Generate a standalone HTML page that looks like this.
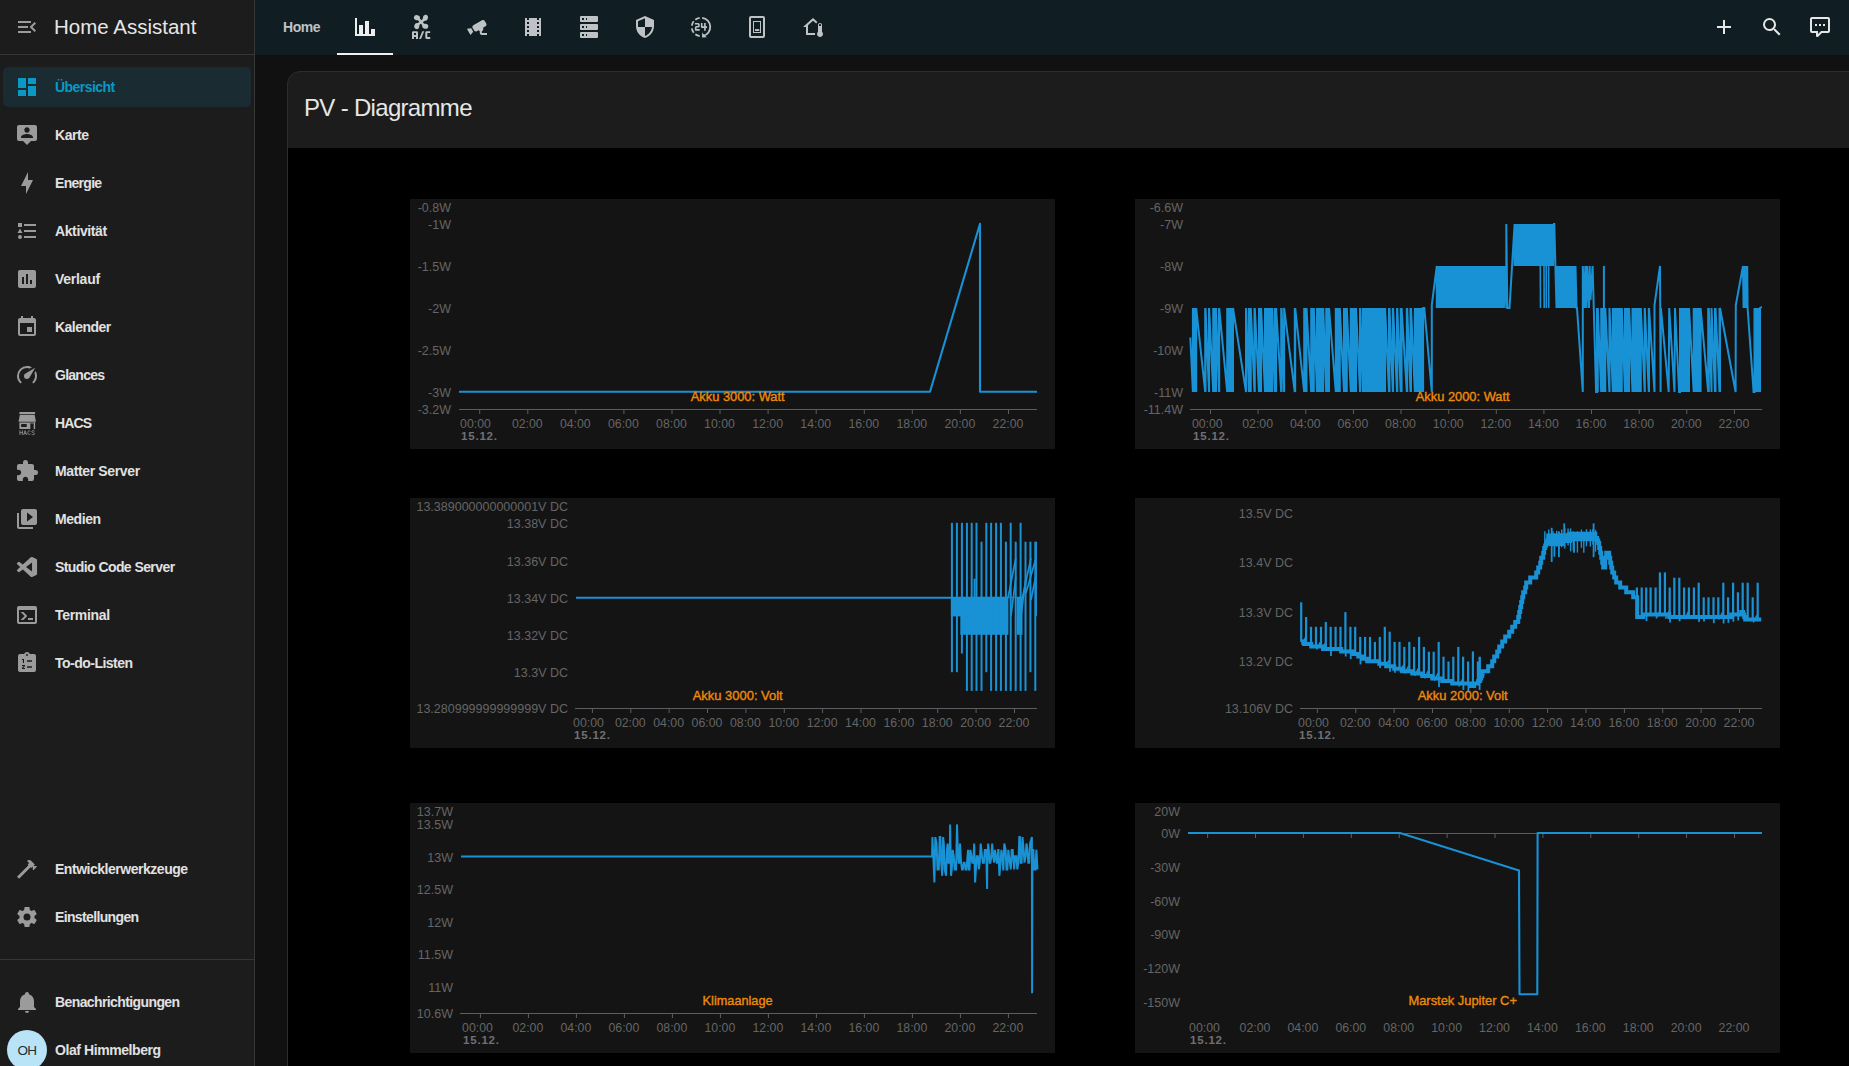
<!DOCTYPE html>
<html lang="de"><head><meta charset="utf-8"><title>Home Assistant</title>
<style>
*{margin:0;padding:0;box-sizing:border-box}
html,body{width:1849px;height:1066px;overflow:hidden;background:#111111;font-family:"Liberation Sans", sans-serif;color:#e1e1e1}
.ic{position:absolute;display:block;overflow:visible}
#root{position:relative;width:1849px;height:1066px;overflow:hidden;background:#111111}
#side{position:absolute;left:0;top:0;width:255px;height:1066px;background:#1c1c1c;border-right:1px solid #363636}
#sidehead{position:absolute;left:0;top:0;width:254px;height:55px;border-bottom:1px solid #363636}
#hatitle{position:absolute;left:54px;top:14px;font-size:20.5px;line-height:26px;color:#e6e6e6;white-space:nowrap}
#sel{position:absolute;left:3px;top:67px;width:248px;height:40px;border-radius:5px;background:#1a2b32}
.sl{position:absolute;font-size:14px;font-weight:700;line-height:24px;color:#e1e1e1;white-space:nowrap}
#sidediv{position:absolute;left:0;top:959px;width:254px;height:1px;background:#363636}
#avatar{position:absolute;left:7px;top:1030px;width:40px;height:40px;border-radius:50%;background:#b9e4f7;color:#1f2f36;font-size:13.5px;letter-spacing:-0.6px;text-align:center;line-height:41px}
#head{position:absolute;left:255px;top:0;width:1594px;height:55px;background:#101e24}
#tabhome{position:absolute;left:28px;top:15px;font-size:14px;font-weight:700;line-height:24px;color:#bfc3c5;white-space:nowrap}
#tabline{position:absolute;left:82px;top:53px;width:56px;height:2px;background:#f0f0f0}
#card{position:absolute;left:287px;top:71px;width:1600px;height:1100px;background:#1c1c1c;border:1px solid #2d2d2d;border-radius:13px;overflow:hidden}
#cardblack{position:absolute;left:0;top:76px;width:1600px;height:1100px;background:#000}
#cardtitle{position:absolute;left:304px;top:92px;font-size:24px;line-height:32px;color:#e6e6e6;white-space:nowrap}
#charts{position:absolute;left:0;top:0}
#charts text{font-family:"Liberation Sans", sans-serif}
</style></head><body><div id="root">
<div id="side">
<div id="sidehead"></div>
<svg class="ic" style="left:15.0px;top:15.0px;width:24px;height:24px" viewBox="0 0 24 24" fill="#9b9b9b" ><path d="M21,15.61L19.59,17L14.58,12L19.59,7L21,8.39L17.44,12L21,15.61M3,6H16V8H3V6M3,13V11H13V13H3M3,18V16H16V18H3Z"/></svg>
<div id="hatitle" style="letter-spacing:-0.002px">Home Assistant</div>
<div id="sel"></div>
<svg class="ic" style="left:15.0px;top:75.0px;width:24px;height:24px" viewBox="0 0 24 24" fill="#0b98c5" ><path d="M13,3V9H21V3M13,21H21V11H13M3,21H11V15H3M3,13H11V3H3V13Z"/></svg>
<div class="sl" style="left:55px;top:75px;letter-spacing:-0.560px;color:#0b98c5;">Übersicht</div>
<svg class="ic" style="left:15.0px;top:123.0px;width:24px;height:24px" viewBox="0 0 24 24" fill="#9b9b9b" ><path d="M20,2H4A2,2 0 0,0 2,4V16A2,2 0 0,0 4,18H8L12,22L16,18H20A2,2 0 0,0 22,16V4A2,2 0 0,0 20,2M12,4.3C13.5,4.3 14.7,5.5 14.7,7C14.7,8.5 13.5,9.7 12,9.7C10.5,9.7 9.3,8.5 9.3,7C9.3,5.5 10.5,4.3 12,4.3M18,15H6V14.1C6,12.1 10,11 12,11C14,11 18,12.1 18,14.1V15Z"/></svg>
<div class="sl" style="left:55px;top:123px;letter-spacing:-0.424px;">Karte</div>
<svg class="ic" style="left:15.0px;top:171.0px;width:24px;height:24px" viewBox="0 0 24 24" fill="#9b9b9b" ><path d="M11,15H6L13,1V9H18L11,23V15Z"/></svg>
<div class="sl" style="left:55px;top:171px;letter-spacing:-0.710px;">Energie</div>
<svg class="ic" style="left:15.0px;top:219.0px;width:24px;height:24px" viewBox="0 0 24 24" fill="#9b9b9b" ><path d="M5,9.5L7.5,14H2.5L5,9.5M3,4H7V8H3V4M5,20A2,2 0 0,0 7,18A2,2 0 0,0 5,16A2,2 0 0,0 3,18A2,2 0 0,0 5,20M9,5V7H21V5H9M9,19H21V17H9V19M9,13H21V11H9V13Z"/></svg>
<div class="sl" style="left:55px;top:219px;letter-spacing:-0.392px;">Aktivität</div>
<svg class="ic" style="left:15.0px;top:267.0px;width:24px;height:24px" viewBox="0 0 24 24" fill="#9b9b9b" ><path d="M17,17H15V13H17M13,17H11V7H13M9,17H7V10H9M19,3H5C3.89,3 3,3.89 3,5V19A2,2 0 0,0 5,21H19A2,2 0 0,0 21,19V5C21,3.89 20.1,3 19,3Z"/></svg>
<div class="sl" style="left:55px;top:267px;letter-spacing:-0.267px;">Verlauf</div>
<svg class="ic" style="left:15.0px;top:315.0px;width:24px;height:24px" viewBox="0 0 24 24" fill="#9b9b9b" ><path d="M19,19H5V8H19M16,1V3H8V1H6V3H5C3.89,3 3,3.89 3,5V19A2,2 0 0,0 5,21H19A2,2 0 0,0 21,19V5C21,3.89 20.1,3 19,3H18V1M17,12H12V17H17V12Z"/></svg>
<div class="sl" style="left:55px;top:315px;letter-spacing:-0.546px;">Kalender</div>
<svg class="ic" style="left:15.0px;top:363.0px;width:24px;height:24px" viewBox="0 0 24 24" fill="#9b9b9b" ><path d="M12,16A3,3 0 0,1 9,13C9,11.88 9.61,10.9 10.5,10.39L20.21,4.77L14.68,14.35C14.18,15.33 13.17,16 12,16M12,3C13.81,3 15.5,3.5 16.97,4.32L14.87,5.53C14,5.19 13,5 12,5A8,8 0 0,0 4,13C4,15.21 4.89,17.21 6.34,18.65H6.35C6.74,19.04 6.74,19.67 6.35,20.06C5.96,20.45 5.32,20.45 4.93,20.07V20.07C3.12,18.26 2,15.76 2,13A10,10 0 0,1 12,3M22,13C22,15.76 20.88,18.26 19.07,20.07V20.07C18.68,20.45 18.05,20.45 17.66,20.06C17.27,19.67 17.27,19.04 17.66,18.65V18.65C19.11,17.2 20,15.21 20,13C20,12 19.81,11 19.46,10.1L20.67,8C21.5,9.5 22,11.18 22,13Z"/></svg>
<div class="sl" style="left:55px;top:363px;letter-spacing:-0.731px;">Glances</div>
<svg class="ic" style="left:15.0px;top:411.0px;width:24px;height:24px" viewBox="0 0 24 24" fill="#9b9b9b" ><rect x="4.4" y="1" width="15.7" height="2"/><path d="M4.9,3.8H19.6L21,10.7H3.5Z"/><path fill-rule="evenodd" d="M4.4,11.5H15.3V18.1H4.4Z M6.2,13H11.7V16.1H6.2Z"/><rect x="18.7" y="11.5" width="1.4" height="6.6"/><rect x="15.3" y="11.5" width="4.8" height="0.9"/><g fill="none" stroke="#8c8c8c" stroke-width="0.92"><path d="M4.9,19.3V23.9 M7.4,19.3V23.9 M4.9,21.6H7.4"/><path d="M8.6,23.9L10.1,19.6L11.6,23.9 M9.2,22.6H11"/><path d="M15.4,20.4C14.7,19.3 12.8,19.5 12.8,21.6C12.8,23.8 14.7,24 15.4,22.9"/><path d="M19.6,20.3C18.9,19.3 16.8,19.4 16.9,20.6C17,21.9 19.6,21.4 19.6,22.8C19.6,24 17.3,24 16.6,23"/></g></svg>
<div class="sl" style="left:55px;top:411px;letter-spacing:-0.857px;">HACS</div>
<svg class="ic" style="left:15.0px;top:459.0px;width:24px;height:24px" viewBox="0 0 24 24" fill="#9b9b9b" ><path d="M20.5,11H19V7C19,5.89 18.1,5 17,5H13V3.5A2.5,2.5 0 0,0 10.5,1A2.5,2.5 0 0,0 8,3.5V5H4A2,2 0 0,0 2,7V10.8H3.5C5,10.8 6.2,12 6.2,13.5C6.2,15 5,16.2 3.5,16.2H2V20A2,2 0 0,0 4,22H7.8V20.5C7.8,19 9,17.8 10.5,17.8C12,17.8 13.2,19 13.2,20.5V22H17A2,2 0 0,0 19,20V16H20.5A2.5,2.5 0 0,0 23,13.5A2.5,2.5 0 0,0 20.5,11Z"/></svg>
<div class="sl" style="left:55px;top:459px;letter-spacing:-0.367px;">Matter Server</div>
<svg class="ic" style="left:15.0px;top:507.0px;width:24px;height:24px" viewBox="0 0 24 24" fill="#9b9b9b" ><path d="M4,6H2V20A2,2 0 0,0 4,22H18V20H4V6M20,2H8A2,2 0 0,0 6,4V16A2,2 0 0,0 8,18H20A2,2 0 0,0 22,16V4A2,2 0 0,0 20,2M12,14.5V5.5L18,10L12,14.5Z"/></svg>
<div class="sl" style="left:55px;top:507px;letter-spacing:-0.427px;">Medien</div>
<svg class="ic" style="left:15.0px;top:555.0px;width:24px;height:24px" viewBox="0 0 24 24" fill="#9b9b9b" ><g transform="translate(12 12) scale(0.84) translate(-12 -12)"><path d="M23.15 2.587L18.21.21a1.494 1.494 0 0 0-1.705.29l-9.46 8.63-4.12-3.128a.999.999 0 0 0-1.276.057L.327 7.261A1 1 0 0 0 .326 8.74L3.899 12 .326 15.26a1 1 0 0 0 .001 1.479L1.65 17.94a.999.999 0 0 0 1.276.057l4.12-3.128 9.46 8.63a1.492 1.492 0 0 0 1.704.29l4.942-2.377A1.5 1.5 0 0 0 24 20.06V3.939a1.5 1.5 0 0 0-.85-1.352zm-5.146 14.861L10.826 12l7.178-5.448v10.896z"/></g></svg>
<div class="sl" style="left:55px;top:555px;letter-spacing:-0.578px;">Studio Code Server</div>
<svg class="ic" style="left:15.0px;top:603.0px;width:24px;height:24px" viewBox="0 0 24 24" fill="#9b9b9b" ><path d="M20,19V7H4V19H20M20,3A2,2 0 0,1 22,5V19A2,2 0 0,1 20,21H4A2,2 0 0,1 2,19V5C2,3.89 2.9,3 4,3H20M13,17V15H18V17H13M9.58,13L5.57,9H8.4L11.7,12.3C12.09,12.69 12.09,13.33 11.7,13.72L8.42,17H5.59L9.58,13Z"/></svg>
<div class="sl" style="left:55px;top:603px;letter-spacing:-0.316px;">Terminal</div>
<svg class="ic" style="left:15.0px;top:651.0px;width:24px;height:24px" viewBox="0 0 24 24" fill="#9b9b9b" ><path fill-rule="evenodd" d="M19,3H14.82C14.4,1.84 13.3,1 12,1C10.7,1 9.6,1.84 9.18,3H5A2,2 0 0,0 3,5V19A2,2 0 0,0 5,21H19A2,2 0 0,0 21,19V5A2,2 0 0,0 19,3ZM12,3A1,1 0 0,1 13,4A1,1 0 0,1 12,5A1,1 0 0,1 11,4A1,1 0 0,1 12,3ZM12,9.2H17V10.8H12Z M12,15.2H17V16.8H12ZM7,8H9V12H7.9V9.1H7ZM7,14H10V15L8.4,17H10V18H7V17L8.6,15H7Z"/></svg>
<div class="sl" style="left:55px;top:651px;letter-spacing:-0.512px;">To-do-Listen</div>
<svg class="ic" style="left:15.0px;top:857.0px;width:24px;height:24px" viewBox="0 0 24 24" fill="#9b9b9b" ><path d="M2,19.63L13.43,8.2L12.72,7.5L14.14,6.07L12,3.89C13.2,2.7 15.09,2.7 16.27,3.89L19.87,7.5L18.45,8.91H21.29L22,9.62L18.45,13.21L17.74,12.5V9.62L16.27,11.04L15.56,10.33L4.13,21.76L2,19.63Z"/></svg>
<div class="sl" style="left:55px;top:857px;letter-spacing:-0.474px;">Entwicklerwerkzeuge</div>
<svg class="ic" style="left:15.0px;top:905.0px;width:24px;height:24px" viewBox="0 0 24 24" fill="#9b9b9b" ><path d="M12,15.5A3.5,3.5 0 0,1 8.5,12A3.5,3.5 0 0,1 12,8.5A3.5,3.5 0 0,1 15.5,12A3.5,3.5 0 0,1 12,15.5M19.43,12.97C19.47,12.65 19.5,12.33 19.5,12C19.5,11.67 19.47,11.34 19.43,11L21.54,9.37C21.73,9.22 21.78,8.95 21.66,8.73L19.66,5.27C19.54,5.05 19.27,4.96 19.05,5.05L16.56,6.05C16.04,5.66 15.5,5.32 14.87,5.07L14.5,2.42C14.46,2.18 14.25,2 14,2H10C9.75,2 9.54,2.18 9.5,2.42L9.13,5.07C8.5,5.32 7.96,5.66 7.44,6.05L4.95,5.05C4.73,4.96 4.46,5.05 4.34,5.27L2.34,8.73C2.21,8.95 2.27,9.22 2.46,9.37L4.57,11C4.53,11.34 4.5,11.67 4.5,12C4.5,12.33 4.53,12.65 4.57,12.97L2.46,14.63C2.27,14.78 2.21,15.05 2.34,15.27L4.34,18.73C4.46,18.95 4.73,19.03 4.95,18.95L7.44,17.94C7.96,18.34 8.5,18.68 9.13,18.93L9.5,21.58C9.54,21.82 9.75,22 10,22H14C14.25,22 14.46,21.82 14.5,21.58L14.87,18.93C15.5,18.67 16.04,18.34 16.56,17.94L19.05,18.95C19.27,19.03 19.54,18.95 19.66,18.73L21.66,15.27C21.78,15.05 21.73,14.78 21.54,14.63L19.43,12.97Z"/></svg>
<div class="sl" style="left:55px;top:905px;letter-spacing:-0.641px;">Einstellungen</div>
<svg class="ic" style="left:15.0px;top:990.0px;width:24px;height:24px" viewBox="0 0 24 24" fill="#9b9b9b" ><path d="M21,19V20H3V19L5,17V11C5,7.9 7.03,5.17 10,4.29C10,4.19 10,4.1 10,4A2,2 0 0,1 12,2A2,2 0 0,1 14,4C14,4.1 14,4.19 14,4.29C16.97,5.17 19,7.9 19,11V17L21,19M14,21A2,2 0 0,1 12,23A2,2 0 0,1 10,21"/></svg>
<div class="sl" style="left:55px;top:990px;letter-spacing:-0.603px;">Benachrichtigungen</div>
<div id="sidediv"></div>
<div id="avatar"><span>OH</span></div>
<div class="sl" style="left:55px;top:1038px;letter-spacing:-0.424px;">Olaf Himmelberg</div>
</div>
<div id="head">
<div id="tabhome" style="letter-spacing:-0.435px">Home</div>
<svg class="ic" style="left:98.0px;top:15.0px;width:24px;height:24px" viewBox="0 0 24 24" fill="#ededed" color="#ededed"><path d="M22,21H2V3H4V19H6V10H10V19H12V6H16V19H18V14H22V21Z"/></svg>
<svg class="ic" style="left:154.0px;top:15.0px;width:24px;height:24px" viewBox="0 0 24 24" fill="#bfc3c5" color="#bfc3c5"><g transform="rotate(0 12.1 6.95)"><ellipse cx="7.95" cy="2.65" rx="3.05" ry="2.55" transform="rotate(12 7.95 2.65)"/><path d="M12.1,6.95 L9.4,3.6" fill="none" stroke="currentColor" stroke-width="2.5" stroke-linecap="round"/></g><g transform="rotate(90 12.1 6.95)"><ellipse cx="7.95" cy="2.65" rx="3.05" ry="2.55" transform="rotate(12 7.95 2.65)"/><path d="M12.1,6.95 L9.4,3.6" fill="none" stroke="currentColor" stroke-width="2.5" stroke-linecap="round"/></g><g transform="rotate(180 12.1 6.95)"><ellipse cx="7.95" cy="2.65" rx="3.05" ry="2.55" transform="rotate(12 7.95 2.65)"/><path d="M12.1,6.95 L9.4,3.6" fill="none" stroke="currentColor" stroke-width="2.5" stroke-linecap="round"/></g><g transform="rotate(270 12.1 6.95)"><ellipse cx="7.95" cy="2.65" rx="3.05" ry="2.55" transform="rotate(12 7.95 2.65)"/><path d="M12.1,6.95 L9.4,3.6" fill="none" stroke="currentColor" stroke-width="2.5" stroke-linecap="round"/></g><circle cx="12.1" cy="6.95" r="1.5"/><path fill-rule="evenodd" d="M3,24V17.6A1.4,1.4 0 0,1 4.4,16.2H7.6A1.4,1.4 0 0,1 9,17.6V24H7V21.9H5V24Z M5,18H7V20.1H5Z"/><path d="M10.1,24L13.3,16.2H15.2L12,24Z"/><path d="M21.2,16.2V18.1H18.3V22.1H21.2V24H17.7A1.4,1.4 0 0,1 16.3,22.6V17.6A1.4,1.4 0 0,1 17.7,16.2Z"/></svg>
<svg class="ic" style="left:210.0px;top:15.0px;width:24px;height:24px" viewBox="0 0 24 24" fill="#bfc3c5" color="#bfc3c5"><path d="M18.15,4.94C17.77,4.91 17.37,5 17,5.2L8.35,10.2C7.39,10.76 7.07,12 7.62,12.94L9.12,15.53C9.67,16.5 10.89,16.82 11.85,16.27L13.65,15.23C13.92,15.69 14.32,16.06 14.81,16.27V18.04C14.81,19.13 15.7,20 16.81,20H22V18.04H16.81V16.27C17.72,15.87 18.31,14.97 18.31,14C18.31,13.54 18.19,13.11 17.97,12.73L20.5,11.27C21.47,10.71 21.8,9.5 21.24,8.53L19.74,5.94C19.4,5.34 18.79,5 18.15,4.94M6.22,13.17L2,13.87L2.75,15.17L4.75,18.63L5.5,19.93L8.22,16.63L6.22,13.17Z"/></svg>
<svg class="ic" style="left:266.0px;top:15.0px;width:24px;height:24px" viewBox="0 0 24 24" fill="#bfc3c5" color="#bfc3c5"><path d="M18,9H16V7H18M18,13H16V11H18M18,17H16V15H18M8,9H6V7H8M8,13H6V11H8M8,17H6V15H8M18,3V5H16V3H8V5H6V3H4V21H6V19H8V21H16V19H18V21H20V3H18Z"/></svg>
<svg class="ic" style="left:322.0px;top:15.0px;width:24px;height:24px" viewBox="0 0 24 24" fill="#bfc3c5" color="#bfc3c5"><path d="M4,1H20A1,1 0 0,1 21,2V6A1,1 0 0,1 20,7H4A1,1 0 0,1 3,6V2A1,1 0 0,1 4,1M4,9H20A1,1 0 0,1 21,10V14A1,1 0 0,1 20,15H4A1,1 0 0,1 3,14V10A1,1 0 0,1 4,9M4,17H20A1,1 0 0,1 21,18V22A1,1 0 0,1 20,23H4A1,1 0 0,1 3,22V18A1,1 0 0,1 4,17M9,5H10V3H9V5M9,13H10V11H9V13M9,21H10V19H9V21M5,3V5H7V3H5M5,11V13H7V11H5M5,19V21H7V19H5Z"/></svg>
<svg class="ic" style="left:378.0px;top:15.0px;width:24px;height:24px" viewBox="0 0 24 24" fill="#bfc3c5" color="#bfc3c5"><path d="M12,12H19C18.47,16.11 15.72,19.78 12,20.92V12H5V6.3L12,3.19M12,1L3,5V11C3,16.55 6.84,21.73 12,23C17.16,21.73 21,16.55 21,11V5L12,1Z"/></svg>
<svg class="ic" style="left:434.0px;top:15.0px;width:24px;height:24px" viewBox="0 0 24 24" fill="#bfc3c5" color="#bfc3c5"><path d="M13.2,2.80 A9.25,9.25 0 0 1 14.2,20.95" fill="none" stroke="currentColor" stroke-width="1.8"/><path d="M13.1,17.6 L13.1,22.4 L17.9,22.2 L15.6,20.6 Z"/><path d="M10.71,21.16 A9.25,9.25 0 0 1 6.31,19.29" fill="none" stroke="currentColor" stroke-width="1.8"/><path d="M4.71,17.69 A9.25,9.25 0 0 1 2.84,13.29" fill="none" stroke="currentColor" stroke-width="1.8"/><path d="M2.84,10.71 A9.25,9.25 0 0 1 4.71,6.31" fill="none" stroke="currentColor" stroke-width="1.8"/><path d="M6.31,4.71 A9.25,9.25 0 0 1 10.71,2.84" fill="none" stroke="currentColor" stroke-width="1.8"/><g fill="none" stroke="currentColor" stroke-width="1.6" stroke-linejoin="round"><path d="M5.9,8.7 H9.1 Q9.9,8.7 9.9,9.5 V10.9 Q9.9,11.75 9.1,11.75 H7.5 Q6.7,11.75 6.7,12.55 V14.9 H10.7"/><path d="M12.7,7.9 V12.1 H18 M15.9,7.9 V15.7"/></g></svg>
<svg class="ic" style="left:490.0px;top:15.0px;width:24px;height:24px" viewBox="0 0 24 24" fill="#bfc3c5" color="#bfc3c5"><path fill-rule="evenodd" d="M6,1H18A2,2 0 0,1 20,3V21A2,2 0 0,1 18,23H6A2,2 0 0,1 4,21V3A2,2 0 0,1 6,1Z M6,3V21H18V3Z"/><path fill-rule="evenodd" d="M8,6H16V18H8Z M9,7V17H15V7Z"/><rect x="10" y="14.1" width="4.3" height="1.9"/></svg>
<svg class="ic" style="left:546.0px;top:15.0px;width:24px;height:24px" viewBox="0 0 24 24" fill="#bfc3c5" color="#bfc3c5"><path d="M19 8C20.11 8 21 8.9 21 10V16.76C21.61 17.31 22 18.11 22 19C22 20.66 20.66 22 19 22C17.34 22 16 20.66 16 19C16 18.11 16.39 17.31 17 16.76V10C17 8.9 17.9 8 19 8M19 9C18.45 9 18 9.45 18 10V11H20V10C20 9.45 19.55 9 19 9M12 5.69L7 10.19V18H14.1L14 19L14.1 20H5V12H2L12 3L16.4 6.96C15.89 7.4 15.5 7.97 15.25 8.61L12 5.69Z"/></svg>
<div id="tabline"></div>
<svg class="ic" style="left:1457.0px;top:15.0px;width:24px;height:24px" viewBox="0 0 24 24" fill="#e6e6e6" ><path d="M19,13H13V19H11V13H5V11H11V5H13V11H19V13Z"/></svg>
<svg class="ic" style="left:1505.0px;top:15.0px;width:24px;height:24px" viewBox="0 0 24 24" fill="#e6e6e6" ><path d="M9.5,3A6.5,6.5 0 0,1 16,9.5C16,11.11 15.41,12.59 14.44,13.73L14.71,14H15.5L20.5,19L19,20.5L14,15.5V14.71L13.73,14.44C12.59,15.41 11.11,16 9.5,16A6.5,6.5 0 0,1 3,9.5A6.5,6.5 0 0,1 9.5,3M9.5,5C7,5 5,7 5,9.5C5,12 7,14 9.5,14C12,14 14,12 14,9.5C14,7 12,5 9.5,5Z"/></svg>
<svg class="ic" style="left:1553.0px;top:15.0px;width:24px;height:24px" viewBox="0 0 24 24" fill="#e6e6e6" ><path d="M9,22A1,1 0 0,1 8,21V18H4A2,2 0 0,1 2,16V4C2,2.89 2.9,2 4,2H20A2,2 0 0,1 22,4V16A2,2 0 0,1 20,18H13.9L10.2,21.71C10,21.9 9.75,22 9.5,22H9M10,16V19.08L13.08,16H20V4H4V16H10M17,11H15V9H17V11M13,11H11V9H13V11M9,11H7V9H9V11Z"/></svg>
</div>
<div id="card"><div id="cardblack"></div></div>
<div id="cardtitle" style="letter-spacing:-0.683px">PV - Diagramme</div>
<svg id="charts" width="1849" height="1066" viewBox="0 0 1849 1066">
<rect x="410" y="199" width="645" height="250" fill="#141414"/>
<text x="451" y="212.3" font-size="12.5" fill="#656565" text-anchor="end">-0.8W</text>
<text x="451" y="229.0" font-size="12.5" fill="#656565" text-anchor="end">-1W</text>
<text x="451" y="271.0" font-size="12.5" fill="#656565" text-anchor="end">-1.5W</text>
<text x="451" y="313.0" font-size="12.5" fill="#656565" text-anchor="end">-2W</text>
<text x="451" y="355.0" font-size="12.5" fill="#656565" text-anchor="end">-2.5W</text>
<text x="451" y="397.0" font-size="12.5" fill="#656565" text-anchor="end">-3W</text>
<text x="451" y="414.0" font-size="12.5" fill="#656565" text-anchor="end">-3.2W</text>
<rect x="459" y="409" width="578" height="1" fill="#5e5e62"/>
<rect x="479.2" y="409" width="1" height="5" fill="#5e5e62"/>
<text x="475.5" y="428" font-size="12.3" fill="#656565" text-anchor="middle">00:00</text>
<rect x="527.3" y="409" width="1" height="5" fill="#5e5e62"/>
<text x="527.3" y="428" font-size="12.3" fill="#656565" text-anchor="middle">02:00</text>
<rect x="575.3" y="409" width="1" height="5" fill="#5e5e62"/>
<text x="575.3" y="428" font-size="12.3" fill="#656565" text-anchor="middle">04:00</text>
<rect x="623.4" y="409" width="1" height="5" fill="#5e5e62"/>
<text x="623.4" y="428" font-size="12.3" fill="#656565" text-anchor="middle">06:00</text>
<rect x="671.5" y="409" width="1" height="5" fill="#5e5e62"/>
<text x="671.5" y="428" font-size="12.3" fill="#656565" text-anchor="middle">08:00</text>
<rect x="719.5" y="409" width="1" height="5" fill="#5e5e62"/>
<text x="719.5" y="428" font-size="12.3" fill="#656565" text-anchor="middle">10:00</text>
<rect x="767.6" y="409" width="1" height="5" fill="#5e5e62"/>
<text x="767.6" y="428" font-size="12.3" fill="#656565" text-anchor="middle">12:00</text>
<rect x="815.7" y="409" width="1" height="5" fill="#5e5e62"/>
<text x="815.7" y="428" font-size="12.3" fill="#656565" text-anchor="middle">14:00</text>
<rect x="863.8" y="409" width="1" height="5" fill="#5e5e62"/>
<text x="863.8" y="428" font-size="12.3" fill="#656565" text-anchor="middle">16:00</text>
<rect x="911.8" y="409" width="1" height="5" fill="#5e5e62"/>
<text x="911.8" y="428" font-size="12.3" fill="#656565" text-anchor="middle">18:00</text>
<rect x="959.9" y="409" width="1" height="5" fill="#5e5e62"/>
<text x="959.9" y="428" font-size="12.3" fill="#656565" text-anchor="middle">20:00</text>
<rect x="1008.0" y="409" width="1" height="5" fill="#5e5e62"/>
<text x="1008.0" y="428" font-size="12.3" fill="#656565" text-anchor="middle">22:00</text>
<text x="461" y="439.6" font-size="11.5" font-weight="700" fill="#707074" letter-spacing="0.8">15.12.</text>
<path d="M459.0,391.8 L930.0,391.8 L980.0,223.8 L980.0,391.8 L1037.0,391.8" fill="none" stroke="#1991d5" stroke-width="2.1" stroke-linejoin="round" stroke-miterlimit="2" stroke-linecap="butt"/>
<text x="737.7" y="401" font-size="12.6" font-weight="400" fill="#ee8a0a" stroke="#ee8a0a" stroke-width="0.35" text-anchor="middle" textLength="94" lengthAdjust="spacingAndGlyphs">Akku 3000: Watt</text>
<rect x="1135" y="199" width="645" height="250" fill="#141414"/>
<text x="1183" y="212.3" font-size="12.5" fill="#656565" text-anchor="end">-6.6W</text>
<text x="1183" y="229.0" font-size="12.5" fill="#656565" text-anchor="end">-7W</text>
<text x="1183" y="271.0" font-size="12.5" fill="#656565" text-anchor="end">-8W</text>
<text x="1183" y="313.0" font-size="12.5" fill="#656565" text-anchor="end">-9W</text>
<text x="1183" y="355.0" font-size="12.5" fill="#656565" text-anchor="end">-10W</text>
<text x="1183" y="397.0" font-size="12.5" fill="#656565" text-anchor="end">-11W</text>
<text x="1183" y="414.0" font-size="12.5" fill="#656565" text-anchor="end">-11.4W</text>
<rect x="1190" y="409" width="572" height="1" fill="#5e5e62"/>
<rect x="1210.0" y="409" width="1" height="5" fill="#5e5e62"/>
<text x="1207.3" y="428" font-size="12.3" fill="#656565" text-anchor="middle">00:00</text>
<rect x="1257.6" y="409" width="1" height="5" fill="#5e5e62"/>
<text x="1257.6" y="428" font-size="12.3" fill="#656565" text-anchor="middle">02:00</text>
<rect x="1305.3" y="409" width="1" height="5" fill="#5e5e62"/>
<text x="1305.3" y="428" font-size="12.3" fill="#656565" text-anchor="middle">04:00</text>
<rect x="1352.9" y="409" width="1" height="5" fill="#5e5e62"/>
<text x="1352.9" y="428" font-size="12.3" fill="#656565" text-anchor="middle">06:00</text>
<rect x="1400.5" y="409" width="1" height="5" fill="#5e5e62"/>
<text x="1400.5" y="428" font-size="12.3" fill="#656565" text-anchor="middle">08:00</text>
<rect x="1448.2" y="409" width="1" height="5" fill="#5e5e62"/>
<text x="1448.2" y="428" font-size="12.3" fill="#656565" text-anchor="middle">10:00</text>
<rect x="1495.8" y="409" width="1" height="5" fill="#5e5e62"/>
<text x="1495.8" y="428" font-size="12.3" fill="#656565" text-anchor="middle">12:00</text>
<rect x="1543.4" y="409" width="1" height="5" fill="#5e5e62"/>
<text x="1543.4" y="428" font-size="12.3" fill="#656565" text-anchor="middle">14:00</text>
<rect x="1591.0" y="409" width="1" height="5" fill="#5e5e62"/>
<text x="1591.0" y="428" font-size="12.3" fill="#656565" text-anchor="middle">16:00</text>
<rect x="1638.7" y="409" width="1" height="5" fill="#5e5e62"/>
<text x="1638.7" y="428" font-size="12.3" fill="#656565" text-anchor="middle">18:00</text>
<rect x="1686.3" y="409" width="1" height="5" fill="#5e5e62"/>
<text x="1686.3" y="428" font-size="12.3" fill="#656565" text-anchor="middle">20:00</text>
<rect x="1733.9" y="409" width="1" height="5" fill="#5e5e62"/>
<text x="1733.9" y="428" font-size="12.3" fill="#656565" text-anchor="middle">22:00</text>
<text x="1193" y="439.6" font-size="11.5" font-weight="700" fill="#707074" letter-spacing="0.8">15.12.</text>
<path d="M1190.3,337.5 L1192.9,392.0 L1192.9,392.0 L1192.9,308.0 L1193.5,392.0 L1193.5,308.0 L1194.0,392.0 L1194.0,308.0 L1194.8,392.0 L1194.8,308.0 L1195.3,392.0 L1195.3,308.0 L1196.0,392.0 L1196.0,308.0 L1196.2,392.0 L1196.2,308.0 L1205.2,392.0 L1205.2,308.0 L1205.5,392.0 L1205.5,308.0 L1209.0,392.0 L1209.0,308.0 L1209.1,392.0 L1209.1,308.0 L1213.2,392.0 L1213.2,308.0 L1213.6,392.0 L1213.6,308.0 L1214.3,392.0 L1214.3,308.0 L1214.8,392.0 L1214.8,308.0 L1215.3,392.0 L1215.3,308.0 L1215.9,392.0 L1215.9,308.0 L1216.0,392.0 L1216.0,308.0 L1219.0,392.0 L1219.0,308.0 L1219.2,392.0 L1219.2,308.0 L1227.2,392.0 L1227.2,308.0 L1227.8,392.0 L1227.8,308.0 L1228.6,392.0 L1228.6,308.0 L1229.5,392.0 L1229.5,308.0 L1230.2,392.0 L1230.2,308.0 L1230.9,392.0 L1230.9,308.0 L1231.8,392.0 L1231.8,308.0 L1232.3,392.0 L1232.3,308.0 L1233.0,392.0 L1233.0,308.0 L1246.0,392.0 L1246.0,308.0 L1246.0,392.0 L1246.0,308.0 L1248.9,392.0 L1248.9,308.0 L1249.4,392.0 L1249.4,308.0 L1249.9,392.0 L1249.9,308.0 L1250.5,392.0 L1250.5,308.0 L1250.8,392.0 L1250.8,308.0 L1254.5,392.0 L1254.5,308.0 L1254.8,392.0 L1254.8,308.0 L1259.0,392.0 L1259.0,308.0 L1259.7,392.0 L1259.7,308.0 L1260.5,392.0 L1260.5,308.0 L1261.1,392.0 L1261.1,308.0 L1261.1,392.0 L1261.1,308.0 L1265.0,392.0 L1265.0,308.0 L1265.4,392.0 L1265.4,308.0 L1265.9,392.0 L1265.9,308.0 L1266.5,392.0 L1266.5,308.0 L1267.3,392.0 L1267.3,308.0 L1267.9,392.0 L1267.9,308.0 L1268.5,392.0 L1268.5,308.0 L1269.3,392.0 L1269.3,308.0 L1269.9,392.0 L1269.9,308.0 L1270.5,392.0 L1270.5,308.0 L1271.4,392.0 L1271.4,308.0 L1272.2,392.0 L1272.2,308.0 L1272.2,392.0 L1272.2,308.0 L1274.9,392.0 L1274.9,308.0 L1275.6,392.0 L1275.6,308.0 L1276.1,392.0 L1276.1,308.0 L1281.2,392.0 L1281.2,308.0 L1281.6,392.0 L1281.6,308.0 L1284.1,392.0 L1284.1,308.0 L1294.8,392.0 L1294.8,308.0 L1295.2,392.0 L1295.2,308.0 L1304.2,392.0 L1304.2,308.0 L1304.7,392.0 L1304.7,308.0 L1305.7,392.0 L1305.7,308.0 L1306.2,392.0 L1306.2,308.0 L1306.5,392.0 L1306.5,308.0 L1311.2,392.0 L1311.2,308.0 L1312.0,392.0 L1312.0,308.0 L1312.5,392.0 L1312.5,308.0 L1313.2,392.0 L1313.2,308.0 L1313.7,392.0 L1313.7,308.0 L1313.8,392.0 L1313.8,308.0 L1317.0,392.0 L1317.0,308.0 L1317.8,392.0 L1317.8,308.0 L1318.5,392.0 L1318.5,308.0 L1319.4,392.0 L1319.4,308.0 L1320.0,392.0 L1320.0,308.0 L1320.8,392.0 L1320.8,308.0 L1321.6,392.0 L1321.6,308.0 L1322.3,392.0 L1322.3,308.0 L1323.0,392.0 L1323.0,308.0 L1323.2,392.0 L1323.2,308.0 L1326.2,392.0 L1326.2,308.0 L1327.1,392.0 L1327.1,308.0 L1327.8,392.0 L1327.8,308.0 L1328.5,392.0 L1328.5,308.0 L1329.0,392.0 L1329.0,308.0 L1335.8,392.0 L1335.8,308.0 L1336.6,392.0 L1336.6,308.0 L1337.3,392.0 L1337.3,308.0 L1338.3,392.0 L1338.3,308.0 L1339.1,392.0 L1339.1,308.0 L1339.7,392.0 L1339.7,308.0 L1339.8,392.0 L1339.8,308.0 L1344.0,392.0 L1344.0,308.0 L1344.7,392.0 L1344.7,308.0 L1345.2,392.0 L1345.2,308.0 L1345.9,392.0 L1345.9,308.0 L1346.4,392.0 L1346.4,308.0 L1346.8,392.0 L1346.8,308.0 L1350.8,392.0 L1350.8,308.0 L1351.2,392.0 L1351.2,308.0 L1352.1,392.0 L1352.1,308.0 L1352.6,392.0 L1352.6,308.0 L1353.2,392.0 L1353.2,308.0 L1353.8,392.0 L1353.8,308.0 L1354.7,392.0 L1354.7,308.0 L1355.2,392.0 L1355.2,308.0 L1355.8,392.0 L1355.8,308.0 L1356.0,392.0 L1356.0,308.0 L1360.0,392.0 L1360.0,308.0 L1360.3,392.0 L1360.3,308.0 L1363.0,392.0 L1363.0,308.0 L1363.8,392.0 L1363.8,308.0 L1364.7,392.0 L1364.7,308.0 L1365.3,392.0 L1365.3,308.0 L1365.9,392.0 L1365.9,308.0 L1366.6,392.0 L1366.6,308.0 L1367.5,392.0 L1367.5,308.0 L1368.4,392.0 L1368.4,308.0 L1368.9,392.0 L1368.9,308.0 L1369.5,392.0 L1369.5,308.0 L1370.0,392.0 L1370.0,308.0 L1370.6,392.0 L1370.6,308.0 L1371.3,392.0 L1371.3,308.0 L1372.0,392.0 L1372.0,308.0 L1372.6,392.0 L1372.6,308.0 L1373.1,392.0 L1373.1,308.0 L1373.7,392.0 L1373.7,308.0 L1374.3,392.0 L1374.3,308.0 L1375.1,392.0 L1375.1,308.0 L1376.0,392.0 L1376.0,308.0 L1376.8,392.0 L1376.8,308.0 L1377.5,392.0 L1377.5,308.0 L1378.3,392.0 L1378.3,308.0 L1379.1,392.0 L1379.1,308.0 L1379.5,392.0 L1379.5,308.0 L1380.4,392.0 L1380.4,308.0 L1381.3,392.0 L1381.3,308.0 L1382.2,392.0 L1382.2,308.0 L1383.0,392.0 L1383.0,308.0 L1383.7,392.0 L1383.7,308.0 L1384.3,392.0 L1384.3,308.0 L1384.8,392.0 L1384.8,308.0 L1385.1,392.0 L1385.1,308.0 L1389.0,392.0 L1389.0,308.0 L1389.4,392.0 L1389.4,308.0 L1389.5,392.0 L1389.5,308.0 L1392.8,392.0 L1392.8,308.0 L1393.1,392.0 L1393.1,308.0 L1397.0,392.0 L1397.0,308.0 L1397.3,392.0 L1397.3,308.0 L1400.7,392.0 L1400.7,308.0 L1401.3,392.0 L1401.3,308.0 L1401.6,392.0 L1401.6,308.0 L1406.8,392.0 L1406.8,308.0 L1407.2,392.0 L1407.2,308.0 L1407.2,392.0 L1407.2,308.0 L1410.5,392.0 L1410.5,308.0 L1411.0,392.0 L1411.0,308.0 L1414.8,392.0 L1414.8,308.0 L1415.4,392.0 L1415.4,308.0 L1415.8,392.0 L1415.8,308.0 L1416.7,392.0 L1416.7,308.0 L1417.5,392.0 L1417.5,308.0 L1418.0,392.0 L1418.0,308.0 L1418.6,392.0 L1418.6,308.0 L1419.2,392.0 L1419.2,308.0 L1419.8,392.0 L1419.8,308.0 L1420.4,392.0 L1420.4,308.0 L1421.2,392.0 L1421.2,308.0 L1422.2,392.0 L1422.2,308.0 L1422.9,392.0 L1422.9,308.0 L1423.1,392.0 L1423.1,308.0 L1424.3,308.0 L1431.8,392.0 L1431.8,305.0 L1436.8,266.0 L1436.8,308.0 L1437.4,266.0 L1437.4,308.0 L1438.0,266.0 L1438.0,308.0 L1438.7,266.0 L1438.7,308.0 L1439.4,266.0 L1439.4,308.0 L1440.6,266.0 L1440.6,308.0 L1441.2,266.0 L1441.2,308.0 L1441.7,266.0 L1441.7,308.0 L1443.0,266.0 L1443.0,308.0 L1443.9,266.0 L1443.9,308.0 L1444.5,266.0 L1444.5,308.0 L1445.5,266.0 L1445.5,308.0 L1446.0,266.0 L1446.0,308.0 L1446.9,266.0 L1446.9,308.0 L1448.2,266.0 L1448.2,308.0 L1449.4,266.0 L1449.4,308.0 L1450.5,266.0 L1450.5,308.0 L1451.2,266.0 L1451.2,308.0 L1452.0,266.0 L1452.0,308.0 L1452.6,266.0 L1452.6,308.0 L1453.7,266.0 L1453.7,308.0 L1454.6,266.0 L1454.6,308.0 L1455.8,266.0 L1455.8,308.0 L1456.5,266.0 L1456.5,308.0 L1457.2,266.0 L1457.2,308.0 L1458.4,266.0 L1458.4,308.0 L1459.6,266.0 L1459.6,308.0 L1460.8,266.0 L1460.8,308.0 L1462.0,266.0 L1462.0,308.0 L1463.1,266.0 L1463.1,308.0 L1464.2,266.0 L1464.2,308.0 L1464.9,266.0 L1464.9,308.0 L1465.8,266.0 L1465.8,308.0 L1466.6,266.0 L1466.6,308.0 L1467.1,266.0 L1467.1,308.0 L1467.6,266.0 L1467.6,308.0 L1468.4,266.0 L1468.4,308.0 L1469.1,266.0 L1469.1,308.0 L1470.1,266.0 L1470.1,308.0 L1471.4,266.0 L1471.4,308.0 L1472.2,266.0 L1472.2,308.0 L1473.5,266.0 L1473.5,308.0 L1474.8,266.0 L1474.8,308.0 L1476.0,266.0 L1476.0,308.0 L1476.8,266.0 L1476.8,308.0 L1477.5,266.0 L1477.5,308.0 L1478.2,266.0 L1478.2,308.0 L1478.9,266.0 L1478.9,308.0 L1479.5,266.0 L1479.5,308.0 L1480.5,266.0 L1480.5,308.0 L1481.7,266.0 L1481.7,308.0 L1482.9,266.0 L1482.9,308.0 L1483.8,266.0 L1483.8,308.0 L1484.8,266.0 L1484.8,308.0 L1486.0,266.0 L1486.0,308.0 L1486.5,266.0 L1486.5,308.0 L1487.6,266.0 L1487.6,308.0 L1488.8,266.0 L1488.8,308.0 L1489.9,266.0 L1489.9,308.0 L1491.0,266.0 L1491.0,308.0 L1491.9,266.0 L1491.9,308.0 L1492.5,266.0 L1492.5,308.0 L1493.7,266.0 L1493.7,308.0 L1494.4,266.0 L1494.4,308.0 L1495.6,266.0 L1495.6,308.0 L1496.8,266.0 L1496.8,308.0 L1497.7,266.0 L1497.7,308.0 L1498.5,266.0 L1498.5,308.0 L1499.7,266.0 L1499.7,308.0 L1500.8,266.0 L1500.8,308.0 L1501.5,266.0 L1501.5,308.0 L1502.1,266.0 L1502.1,308.0 L1502.7,266.0 L1502.7,308.0 L1503.9,266.0 L1503.9,308.0 L1505.1,266.0 L1506.3,308.0 L1506.3,224.0 L1507.3,308.0 L1509.5,308.0 L1514.6,224.0 L1514.6,266.0 L1515.2,224.0 L1515.2,266.0 L1516.4,224.0 L1516.4,266.0 L1517.7,224.0 L1517.7,266.0 L1518.7,224.0 L1518.7,266.0 L1519.5,224.0 L1519.5,266.0 L1520.4,224.0 L1520.4,266.0 L1521.0,224.0 L1521.0,266.0 L1521.5,224.0 L1521.5,266.0 L1522.8,224.0 L1522.8,266.0 L1523.8,224.0 L1523.8,266.0 L1524.7,224.0 L1524.7,266.0 L1526.0,224.0 L1526.0,266.0 L1526.8,224.0 L1526.8,266.0 L1528.0,224.0 L1528.0,266.0 L1529.2,224.0 L1529.2,266.0 L1529.9,224.0 L1529.9,266.0 L1530.6,224.0 L1530.6,266.0 L1531.3,224.0 L1531.3,266.0 L1532.0,224.0 L1532.0,266.0 L1533.0,224.0 L1533.0,266.0 L1533.7,224.0 L1533.7,266.0 L1534.5,224.0 L1534.5,266.0 L1535.1,224.0 L1535.1,266.0 L1536.3,224.0 L1536.3,266.0 L1537.1,224.0 L1537.1,266.0 L1538.0,224.0 L1538.0,266.0 L1539.0,224.0 L1539.0,266.0 L1540.2,224.0 L1540.2,266.0 L1541.0,224.0 L1541.0,266.0 L1542.2,224.0 L1542.2,266.0 L1543.1,224.0 L1543.1,266.0 L1544.1,224.0 L1544.1,266.0 L1545.0,224.0 L1545.0,266.0 L1545.5,224.0 L1545.5,266.0 L1546.4,224.0 L1546.4,266.0 L1547.0,224.0 L1547.0,266.0 L1547.5,224.0 L1547.5,266.0 L1548.6,224.0 L1548.6,266.0 L1549.3,224.0 L1549.3,266.0 L1550.2,224.0 L1550.2,266.0 L1551.2,224.0 L1551.2,266.0 L1552.2,224.0 L1552.2,266.0 L1553.0,224.0 L1553.0,266.0 L1553.9,224.0 L1554.3,224.0 L1556.5,308.0 L1556.5,266.0 L1557.4,308.0 L1557.4,266.0 L1558.6,308.0 L1558.6,266.0 L1559.2,308.0 L1559.2,266.0 L1560.1,308.0 L1560.1,266.0 L1560.8,308.0 L1560.8,266.0 L1561.5,308.0 L1561.5,266.0 L1562.6,308.0 L1562.6,266.0 L1563.5,308.0 L1563.5,266.0 L1564.5,308.0 L1564.5,266.0 L1565.6,308.0 L1565.6,266.0 L1566.8,308.0 L1566.8,266.0 L1567.7,308.0 L1567.7,266.0 L1568.7,308.0 L1568.7,266.0 L1569.6,308.0 L1569.6,266.0 L1570.5,308.0 L1570.5,266.0 L1571.5,308.0 L1571.5,266.0 L1572.4,308.0 L1572.4,266.0 L1573.3,308.0 L1573.3,266.0 L1574.2,308.0 L1574.2,266.0 L1575.5,308.0 L1575.5,266.0 L1576.5,308.0 L1577.0,308.0 L1582.8,392.0 L1582.8,266.0 L1584.6,308.0 L1585.3,266.0 L1586.4,308.0 L1587.1,266.0 L1589.0,308.0 L1589.7,266.0 L1590.5,300.0 L1592.6,266.0 L1596.1,392.0 L1597.0,392.0 L1597.0,308.0 L1597.8,392.0 L1597.8,308.0 L1601.2,392.0 L1601.2,308.0 L1602.2,392.0 L1602.2,308.0 L1602.9,392.0 L1602.9,308.0 L1603.7,392.0 L1603.7,308.0 L1604.8,392.0 L1604.8,308.0 L1605.3,392.0 L1605.3,308.0 L1609.4,392.0 L1609.4,308.0 L1609.5,392.0 L1609.5,308.0 L1612.8,392.0 L1612.8,308.0 L1613.3,392.0 L1613.3,308.0 L1614.1,392.0 L1614.1,308.0 L1614.6,392.0 L1614.6,308.0 L1615.3,392.0 L1615.3,308.0 L1615.8,392.0 L1615.8,308.0 L1616.7,392.0 L1616.7,308.0 L1617.7,392.0 L1617.7,308.0 L1618.7,392.0 L1618.7,308.0 L1619.3,392.0 L1619.3,308.0 L1620.3,392.0 L1620.3,308.0 L1621.1,392.0 L1621.1,308.0 L1621.7,392.0 L1621.7,308.0 L1621.8,392.0 L1621.8,308.0 L1625.0,392.0 L1625.0,308.0 L1626.0,392.0 L1626.0,308.0 L1626.7,392.0 L1626.7,308.0 L1627.7,392.0 L1627.7,308.0 L1628.5,392.0 L1628.5,308.0 L1629.1,392.0 L1629.1,308.0 L1632.5,392.0 L1632.5,308.0 L1633.5,392.0 L1633.5,308.0 L1634.5,392.0 L1634.5,308.0 L1635.1,392.0 L1635.1,308.0 L1635.9,392.0 L1635.9,308.0 L1636.7,392.0 L1636.7,308.0 L1637.4,392.0 L1637.4,308.0 L1638.0,392.0 L1638.0,308.0 L1638.7,392.0 L1638.7,308.0 L1639.7,392.0 L1639.7,308.0 L1640.2,392.0 L1640.2,308.0 L1640.8,392.0 L1640.8,308.0 L1644.7,392.0 L1644.7,308.0 L1644.8,392.0 L1644.8,308.0 L1648.8,392.0 L1648.8,308.0 L1649.0,392.0 L1649.0,308.0 L1654.5,392.0 L1654.5,305.0 L1660.0,266.0 L1660.6,392.0 L1660.9,308.0 L1668.7,392.0 L1669.2,308.0 L1674.5,392.0 L1675.0,308.0 L1679.1,392.0 L1680.0,392.0 L1680.0,308.0 L1680.7,392.0 L1680.7,308.0 L1681.6,392.0 L1681.6,308.0 L1682.4,392.0 L1682.4,308.0 L1683.0,392.0 L1683.0,308.0 L1684.1,392.0 L1684.1,308.0 L1685.0,392.0 L1685.0,308.0 L1686.1,392.0 L1686.1,308.0 L1686.7,392.0 L1686.7,308.0 L1687.3,392.0 L1687.3,308.0 L1687.9,392.0 L1687.9,308.0 L1688.8,392.0 L1688.8,308.0 L1689.0,392.0 L1689.0,308.0 L1693.7,392.0 L1693.7,308.0 L1694.2,392.0 L1694.2,308.0 L1695.0,392.0 L1695.0,308.0 L1696.0,392.0 L1696.0,308.0 L1697.0,392.0 L1697.0,308.0 L1697.7,392.0 L1697.7,308.0 L1698.3,392.0 L1698.3,308.0 L1699.3,392.0 L1699.3,308.0 L1700.2,392.0 L1700.2,308.0 L1700.6,392.0 L1700.6,308.0 L1708.2,392.0 L1708.2,308.0 L1708.8,392.0 L1708.8,308.0 L1711.5,392.0 L1711.5,308.0 L1715.0,392.0 L1715.0,308.0 L1715.5,392.0 L1715.5,308.0 L1715.5,392.0 L1715.5,308.0 L1719.5,392.0 L1719.5,308.0 L1720.0,392.0 L1720.0,308.0 L1735.6,392.0 L1735.8,305.0 L1743.0,266.0 L1743.6,308.0 L1744.2,266.0 L1745.2,308.0 L1745.8,266.0 L1746.6,308.0 L1747.2,266.0 L1747.6,308.0 L1753.6,392.0 L1754.5,392.0 L1754.5,308.0 L1755.1,392.0 L1755.1,308.0 L1756.1,392.0 L1756.1,308.0 L1756.9,392.0 L1756.9,308.0 L1757.8,392.0 L1757.8,308.0 L1758.3,392.0 L1758.3,308.0 L1759.2,392.0 L1759.2,308.0 L1759.8,392.0 L1759.8,308.0 L1760.0,392.0 L1760.0,308.0 L1761.8,306.8" fill="none" stroke="#1991d5" stroke-width="2" stroke-linejoin="miter" stroke-miterlimit="2" stroke-linecap="butt"/>
<path d="M1540.3,266.0 L1540.5,308.0" fill="none" stroke="#1991d5" stroke-width="1.6" stroke-linejoin="miter" stroke-miterlimit="2" stroke-linecap="butt"/>
<path d="M1544.0,266.0 L1544.2,308.0" fill="none" stroke="#1991d5" stroke-width="1.6" stroke-linejoin="miter" stroke-miterlimit="2" stroke-linecap="butt"/>
<path d="M1546.2,266.0 L1546.4,308.0" fill="none" stroke="#1991d5" stroke-width="1.6" stroke-linejoin="miter" stroke-miterlimit="2" stroke-linecap="butt"/>
<path d="M1548.6,266.0 L1548.8,308.0" fill="none" stroke="#1991d5" stroke-width="1.6" stroke-linejoin="miter" stroke-miterlimit="2" stroke-linecap="butt"/>
<path d="M1603.9,266.0 L1603.9,310.0" fill="none" stroke="#1991d5" stroke-width="2" stroke-linejoin="miter" stroke-miterlimit="2" stroke-linecap="butt"/>
<text x="1462.7" y="401" font-size="12.6" font-weight="400" fill="#ee8a0a" stroke="#ee8a0a" stroke-width="0.35" text-anchor="middle" textLength="94" lengthAdjust="spacingAndGlyphs">Akku 2000: Watt</text>
<rect x="410" y="498" width="645" height="250" fill="#141414"/>
<text x="568" y="511.0" font-size="12.5" fill="#656565" text-anchor="end">13.389000000000001V DC</text>
<text x="568" y="528.0" font-size="12.5" fill="#656565" text-anchor="end">13.38V DC</text>
<text x="568" y="565.5" font-size="12.5" fill="#656565" text-anchor="end">13.36V DC</text>
<text x="568" y="603.0" font-size="12.5" fill="#656565" text-anchor="end">13.34V DC</text>
<text x="568" y="640.0" font-size="12.5" fill="#656565" text-anchor="end">13.32V DC</text>
<text x="568" y="677.0" font-size="12.5" fill="#656565" text-anchor="end">13.3V DC</text>
<text x="568" y="713.0" font-size="12.5" fill="#656565" text-anchor="end">13.280999999999999V DC</text>
<rect x="575" y="708" width="462" height="1" fill="#5e5e62"/>
<rect x="591.9" y="708" width="1" height="5" fill="#5e5e62"/>
<text x="588.5" y="727" font-size="12.3" fill="#656565" text-anchor="middle">00:00</text>
<rect x="630.3" y="708" width="1" height="5" fill="#5e5e62"/>
<text x="630.3" y="727" font-size="12.3" fill="#656565" text-anchor="middle">02:00</text>
<rect x="668.6" y="708" width="1" height="5" fill="#5e5e62"/>
<text x="668.6" y="727" font-size="12.3" fill="#656565" text-anchor="middle">04:00</text>
<rect x="707.0" y="708" width="1" height="5" fill="#5e5e62"/>
<text x="707.0" y="727" font-size="12.3" fill="#656565" text-anchor="middle">06:00</text>
<rect x="745.4" y="708" width="1" height="5" fill="#5e5e62"/>
<text x="745.4" y="727" font-size="12.3" fill="#656565" text-anchor="middle">08:00</text>
<rect x="783.8" y="708" width="1" height="5" fill="#5e5e62"/>
<text x="783.8" y="727" font-size="12.3" fill="#656565" text-anchor="middle">10:00</text>
<rect x="822.1" y="708" width="1" height="5" fill="#5e5e62"/>
<text x="822.1" y="727" font-size="12.3" fill="#656565" text-anchor="middle">12:00</text>
<rect x="860.5" y="708" width="1" height="5" fill="#5e5e62"/>
<text x="860.5" y="727" font-size="12.3" fill="#656565" text-anchor="middle">14:00</text>
<rect x="898.9" y="708" width="1" height="5" fill="#5e5e62"/>
<text x="898.9" y="727" font-size="12.3" fill="#656565" text-anchor="middle">16:00</text>
<rect x="937.2" y="708" width="1" height="5" fill="#5e5e62"/>
<text x="937.2" y="727" font-size="12.3" fill="#656565" text-anchor="middle">18:00</text>
<rect x="975.6" y="708" width="1" height="5" fill="#5e5e62"/>
<text x="975.6" y="727" font-size="12.3" fill="#656565" text-anchor="middle">20:00</text>
<rect x="1014.0" y="708" width="1" height="5" fill="#5e5e62"/>
<text x="1014.0" y="727" font-size="12.3" fill="#656565" text-anchor="middle">22:00</text>
<text x="574" y="738.6" font-size="11.5" font-weight="700" fill="#707074" letter-spacing="0.8">15.12.</text>
<path d="M576.0,597.7 L952.0,597.7" fill="none" stroke="#1991d5" stroke-width="2" stroke-linejoin="miter" stroke-miterlimit="2" stroke-linecap="butt"/>
<rect x="950.9" y="596.7" width="57.5" height="19.7" fill="#1991d5"/>
<rect x="960.3" y="615.9" width="48.1" height="18.9" fill="#1991d5"/>
<rect x="1016.9" y="596.7" width="5.6" height="38.1" fill="#1991d5"/>
<rect x="1008.4" y="596.7" width="8.5" height="1.6" fill="#1991d5" opacity="0.55"/>
<path d="M951.9,522.8 L951.9,672.2" fill="none" stroke="#1991d5" stroke-width="2" stroke-linejoin="miter" stroke-miterlimit="2" stroke-linecap="butt"/>
<path d="M956.9,522.8 L956.9,672.2" fill="none" stroke="#1991d5" stroke-width="2" stroke-linejoin="miter" stroke-miterlimit="2" stroke-linecap="butt"/>
<path d="M961.9,522.8 L961.9,653.5" fill="none" stroke="#1991d5" stroke-width="2" stroke-linejoin="miter" stroke-miterlimit="2" stroke-linecap="butt"/>
<path d="M966.9,522.8 L966.9,690.9" fill="none" stroke="#1991d5" stroke-width="2" stroke-linejoin="miter" stroke-miterlimit="2" stroke-linecap="butt"/>
<path d="M971.7,522.8 L971.7,690.9" fill="none" stroke="#1991d5" stroke-width="2" stroke-linejoin="miter" stroke-miterlimit="2" stroke-linecap="butt"/>
<path d="M976.5,522.8 L976.5,690.9" fill="none" stroke="#1991d5" stroke-width="2" stroke-linejoin="miter" stroke-miterlimit="2" stroke-linecap="butt"/>
<path d="M981.5,541.7 L981.5,690.9" fill="none" stroke="#1991d5" stroke-width="2" stroke-linejoin="miter" stroke-miterlimit="2" stroke-linecap="butt"/>
<path d="M986.3,522.8 L986.3,672.2" fill="none" stroke="#1991d5" stroke-width="2" stroke-linejoin="miter" stroke-miterlimit="2" stroke-linecap="butt"/>
<path d="M991.1,522.8 L991.1,690.9" fill="none" stroke="#1991d5" stroke-width="2" stroke-linejoin="miter" stroke-miterlimit="2" stroke-linecap="butt"/>
<path d="M996.1,522.8 L996.1,690.9" fill="none" stroke="#1991d5" stroke-width="2" stroke-linejoin="miter" stroke-miterlimit="2" stroke-linecap="butt"/>
<path d="M1000.9,522.8 L1000.9,690.9" fill="none" stroke="#1991d5" stroke-width="2" stroke-linejoin="miter" stroke-miterlimit="2" stroke-linecap="butt"/>
<path d="M1005.9,541.7 L1005.9,690.9" fill="none" stroke="#1991d5" stroke-width="2" stroke-linejoin="miter" stroke-miterlimit="2" stroke-linecap="butt"/>
<path d="M1010.7,522.8 L1010.7,690.9" fill="none" stroke="#1991d5" stroke-width="2" stroke-linejoin="miter" stroke-miterlimit="2" stroke-linecap="butt"/>
<path d="M1015.7,541.7 L1015.7,690.9" fill="none" stroke="#1991d5" stroke-width="2" stroke-linejoin="miter" stroke-miterlimit="2" stroke-linecap="butt"/>
<path d="M1020.6,522.8 L1020.6,690.9" fill="none" stroke="#1991d5" stroke-width="2" stroke-linejoin="miter" stroke-miterlimit="2" stroke-linecap="butt"/>
<path d="M1025.5,541.7 L1025.5,690.9" fill="none" stroke="#1991d5" stroke-width="2" stroke-linejoin="miter" stroke-miterlimit="2" stroke-linecap="butt"/>
<path d="M1030.4,541.7 L1030.4,672.2" fill="none" stroke="#1991d5" stroke-width="2" stroke-linejoin="miter" stroke-miterlimit="2" stroke-linecap="butt"/>
<path d="M1035.3,541.7 L1035.3,690.9" fill="none" stroke="#1991d5" stroke-width="2" stroke-linejoin="miter" stroke-miterlimit="2" stroke-linecap="butt"/>
<path d="M1008.0,598.0 L1015.8,558.0" fill="none" stroke="#1991d5" stroke-width="1.7" stroke-linejoin="miter" stroke-miterlimit="2" stroke-linecap="butt"/>
<path d="M1011.0,616.0 L1015.8,577.0" fill="none" stroke="#1991d5" stroke-width="1.7" stroke-linejoin="miter" stroke-miterlimit="2" stroke-linecap="butt"/>
<path d="M1021.0,616.0 L1026.0,577.0" fill="none" stroke="#1991d5" stroke-width="1.7" stroke-linejoin="miter" stroke-miterlimit="2" stroke-linecap="butt"/>
<path d="M1021.5,602.0 L1031.0,558.0" fill="none" stroke="#1991d5" stroke-width="1.7" stroke-linejoin="miter" stroke-miterlimit="2" stroke-linecap="butt"/>
<path d="M1026.0,593.0 L1036.0,558.0" fill="none" stroke="#1991d5" stroke-width="1.7" stroke-linejoin="miter" stroke-miterlimit="2" stroke-linecap="butt"/>
<path d="M1031.0,600.0 L1036.0,575.0" fill="none" stroke="#1991d5" stroke-width="1.7" stroke-linejoin="miter" stroke-miterlimit="2" stroke-linecap="butt"/>
<path d="M1036.2,541.7 L1036.2,616.0" fill="none" stroke="#1991d5" stroke-width="1.5" stroke-linejoin="miter" stroke-miterlimit="2" stroke-linecap="butt"/>
<path d="M974.6,578.6 L974.6,600.0" fill="none" stroke="#1991d5" stroke-width="2" stroke-linejoin="miter" stroke-miterlimit="2" stroke-linecap="butt"/>
<text x="737.7" y="700" font-size="12.6" font-weight="400" fill="#ee8a0a" stroke="#ee8a0a" stroke-width="0.35" text-anchor="middle" textLength="90" lengthAdjust="spacingAndGlyphs">Akku 3000: Volt</text>
<rect x="1135" y="498" width="645" height="250" fill="#141414"/>
<text x="1293" y="518.0" font-size="12.5" fill="#656565" text-anchor="end">13.5V DC</text>
<text x="1293" y="567.0" font-size="12.5" fill="#656565" text-anchor="end">13.4V DC</text>
<text x="1293" y="617.0" font-size="12.5" fill="#656565" text-anchor="end">13.3V DC</text>
<text x="1293" y="666.0" font-size="12.5" fill="#656565" text-anchor="end">13.2V DC</text>
<text x="1293" y="713.0" font-size="12.5" fill="#656565" text-anchor="end">13.106V DC</text>
<rect x="1300" y="708" width="462" height="1" fill="#5e5e62"/>
<rect x="1316.9" y="708" width="1" height="5" fill="#5e5e62"/>
<text x="1313.5" y="727" font-size="12.3" fill="#656565" text-anchor="middle">00:00</text>
<rect x="1355.3" y="708" width="1" height="5" fill="#5e5e62"/>
<text x="1355.3" y="727" font-size="12.3" fill="#656565" text-anchor="middle">02:00</text>
<rect x="1393.6" y="708" width="1" height="5" fill="#5e5e62"/>
<text x="1393.6" y="727" font-size="12.3" fill="#656565" text-anchor="middle">04:00</text>
<rect x="1432.0" y="708" width="1" height="5" fill="#5e5e62"/>
<text x="1432.0" y="727" font-size="12.3" fill="#656565" text-anchor="middle">06:00</text>
<rect x="1470.4" y="708" width="1" height="5" fill="#5e5e62"/>
<text x="1470.4" y="727" font-size="12.3" fill="#656565" text-anchor="middle">08:00</text>
<rect x="1508.8" y="708" width="1" height="5" fill="#5e5e62"/>
<text x="1508.8" y="727" font-size="12.3" fill="#656565" text-anchor="middle">10:00</text>
<rect x="1547.1" y="708" width="1" height="5" fill="#5e5e62"/>
<text x="1547.1" y="727" font-size="12.3" fill="#656565" text-anchor="middle">12:00</text>
<rect x="1585.5" y="708" width="1" height="5" fill="#5e5e62"/>
<text x="1585.5" y="727" font-size="12.3" fill="#656565" text-anchor="middle">14:00</text>
<rect x="1623.9" y="708" width="1" height="5" fill="#5e5e62"/>
<text x="1623.9" y="727" font-size="12.3" fill="#656565" text-anchor="middle">16:00</text>
<rect x="1662.2" y="708" width="1" height="5" fill="#5e5e62"/>
<text x="1662.2" y="727" font-size="12.3" fill="#656565" text-anchor="middle">18:00</text>
<rect x="1700.6" y="708" width="1" height="5" fill="#5e5e62"/>
<text x="1700.6" y="727" font-size="12.3" fill="#656565" text-anchor="middle">20:00</text>
<rect x="1739.0" y="708" width="1" height="5" fill="#5e5e62"/>
<text x="1739.0" y="727" font-size="12.3" fill="#656565" text-anchor="middle">22:00</text>
<text x="1299" y="738.6" font-size="11.5" font-weight="700" fill="#707074" letter-spacing="0.8">15.12.</text>
<path d="M1301.2,641.6 L1302.2,641.6 L1303.2,641.6 L1304.2,641.6 L1304.2,644.0 L1305.2,644.0 L1306.2,644.0 L1307.2,644.0 L1308.2,644.0 L1309.2,644.0 L1310.2,644.0 L1311.2,644.0 L1311.2,646.5 L1312.2,646.5 L1313.2,646.5 L1314.2,646.5 L1315.2,646.5 L1316.2,646.5 L1317.2,646.5 L1318.2,646.5 L1319.2,646.5 L1320.2,646.5 L1321.2,646.5 L1322.2,646.5 L1323.2,646.5 L1323.2,649.0 L1324.2,649.0 L1325.2,649.0 L1326.2,649.0 L1327.2,649.0 L1328.2,649.0 L1329.2,649.0 L1330.2,649.0 L1331.2,649.0 L1332.2,649.0 L1333.2,649.0 L1334.2,649.0 L1335.2,649.0 L1336.2,649.0 L1337.2,649.0 L1338.2,649.0 L1339.2,649.0 L1340.2,649.0 L1341.2,649.0 L1341.2,651.4 L1342.2,651.4 L1343.2,651.4 L1344.2,651.4 L1345.2,651.4 L1346.2,651.4 L1347.2,651.4 L1348.2,651.4 L1349.2,651.4 L1350.2,651.4 L1351.2,651.4 L1352.2,651.4 L1353.2,651.4 L1353.2,653.9 L1354.2,653.9 L1355.2,653.9 L1356.2,653.9 L1357.2,653.9 L1358.2,653.9 L1358.2,656.4 L1359.2,656.4 L1360.2,656.4 L1361.2,656.4 L1362.2,656.4 L1362.2,658.8 L1363.2,658.8 L1364.2,658.8 L1365.2,658.8 L1366.2,658.8 L1367.2,658.8 L1367.2,661.3 L1368.2,661.3 L1369.2,661.3 L1370.2,661.3 L1371.2,661.3 L1372.2,661.3 L1373.2,661.3 L1374.2,661.3 L1375.2,661.3 L1376.2,661.3 L1377.2,661.3 L1378.2,661.3 L1379.2,661.3 L1379.2,663.8 L1380.2,663.8 L1381.2,663.8 L1382.2,663.8 L1383.2,663.8 L1384.2,663.8 L1385.2,663.8 L1386.2,663.8 L1386.2,666.2 L1387.2,666.2 L1388.2,666.2 L1389.2,666.2 L1390.2,666.2 L1391.2,666.2 L1392.2,666.2 L1393.2,666.2 L1394.2,666.2 L1394.2,668.7 L1395.2,668.7 L1396.2,668.7 L1397.2,668.7 L1398.2,668.7 L1399.2,668.7 L1400.2,668.7 L1401.2,668.7 L1402.2,668.7 L1402.2,671.2 L1403.2,671.2 L1404.2,671.2 L1405.2,671.2 L1406.2,671.2 L1407.2,671.2 L1408.2,671.2 L1409.2,671.2 L1410.2,671.2 L1411.2,671.2 L1412.2,671.2 L1412.2,673.6 L1413.2,673.6 L1414.2,673.6 L1415.2,673.6 L1416.2,673.6 L1417.2,673.6 L1418.2,673.6 L1419.2,673.6 L1420.2,673.6 L1421.2,673.6 L1422.2,673.6 L1422.2,676.1 L1423.2,676.1 L1424.2,676.1 L1425.2,676.1 L1426.2,676.1 L1427.2,676.1 L1428.2,676.1 L1429.2,676.1 L1430.2,676.1 L1431.2,676.1 L1432.2,676.1 L1432.2,678.6 L1433.2,678.6 L1434.2,678.6 L1435.2,678.6 L1436.2,678.6 L1437.2,678.6 L1438.2,678.6 L1439.2,678.6 L1440.2,678.6 L1441.2,678.6 L1442.2,678.6 L1442.2,681.0 L1443.2,681.0 L1444.2,681.0 L1445.2,681.0 L1446.2,681.0 L1447.2,681.0 L1448.2,681.0 L1449.2,681.0 L1450.2,681.0 L1451.2,681.0 L1452.2,681.0 L1452.2,683.5 L1453.2,683.5 L1454.2,683.5 L1455.2,683.5 L1456.2,683.5 L1457.2,683.5 L1458.2,683.5 L1459.2,683.5 L1460.2,683.5 L1461.2,683.5 L1462.2,683.5 L1463.2,683.5 L1464.2,683.5 L1465.2,683.5 L1466.2,683.5 L1467.2,683.5 L1468.2,683.5 L1469.2,683.5 L1470.2,683.5 L1470.2,686.0 L1471.2,686.0 L1472.2,686.0 L1473.2,686.0 L1474.2,686.0 L1474.2,683.5 L1475.2,683.5 L1476.2,683.5 L1477.2,683.5 L1478.2,683.5 L1478.2,681.0 L1479.2,681.0 L1480.2,681.0 L1480.2,678.6 L1481.2,678.6 L1481.2,676.1 L1482.2,676.1 L1482.2,671.2 L1483.2,671.2 L1484.2,671.2 L1485.2,671.2 L1486.2,671.2 L1487.2,671.2 L1488.2,671.2 L1488.2,666.2 L1489.2,666.2 L1490.2,666.2 L1491.2,666.2 L1492.2,666.2 L1492.2,661.3 L1493.2,661.3 L1494.2,661.3 L1494.2,656.4 L1495.2,656.4 L1496.2,656.4 L1497.2,656.4 L1497.2,651.4 L1498.2,651.4 L1499.2,651.4 L1499.2,646.5 L1500.2,646.5 L1501.2,646.5 L1502.2,646.5 L1502.2,641.6 L1503.2,641.6 L1504.2,641.6 L1505.2,641.6 L1505.2,636.6 L1506.2,636.6 L1507.2,636.6 L1508.2,636.6 L1509.2,636.6 L1509.2,631.7 L1510.2,631.7 L1511.2,631.7 L1512.2,631.7 L1512.2,626.8 L1513.2,626.8 L1514.2,626.8 L1515.2,626.8 L1515.2,621.9 L1516.2,621.9 L1517.2,621.9 L1518.2,621.9 L1518.2,616.9 L1519.2,616.9 L1519.2,612.0 L1520.2,612.0 L1520.2,607.1 L1521.2,607.1 L1521.2,602.1 L1522.2,602.1 L1522.2,597.2 L1523.2,597.2 L1523.2,592.3 L1524.2,592.3 L1525.2,592.3 L1525.2,587.4 L1526.2,587.4 L1526.2,582.4 L1527.2,582.4 L1528.2,582.4 L1529.2,582.4 L1530.2,582.4 L1530.2,577.5 L1531.2,577.5 L1532.2,577.5 L1533.2,577.5 L1534.2,577.5 L1535.2,577.5 L1536.2,577.5 L1536.2,572.6 L1537.2,572.6 L1538.2,572.6 L1538.2,567.6 L1539.2,567.6 L1540.2,567.6 L1540.2,562.7 L1541.2,562.7 L1541.2,557.8 L1542.2,557.8 L1543.2,557.8 L1543.2,552.8 L1544.2,552.8 L1544.2,547.9 L1545.2,547.9 L1545.2,545.4 L1546.2,545.4 L1546.2,543.0 L1547.2,543.0 L1547.2,540.5 L1548.2,540.5 L1549.2,540.5 L1549.2,538.0 L1550.2,538.0 L1551.2,538.0 L1552.2,538.0 L1553.2,538.0 L1554.2,538.0 L1555.2,538.0 L1556.2,538.0 L1557.2,538.0 L1558.2,538.0 L1559.2,538.0 L1560.2,538.0 L1561.2,538.0 L1561.2,535.6 L1562.2,535.6 L1563.2,535.6 L1564.2,535.6 L1565.2,535.6 L1565.2,538.0 L1566.2,538.0 L1567.2,538.0 L1568.2,538.0 L1569.2,538.0 L1570.2,538.0 L1571.2,538.0 L1572.2,538.0 L1573.2,538.0 L1574.2,538.0 L1575.2,538.0 L1576.2,538.0 L1577.2,538.0 L1578.2,538.0 L1579.2,538.0 L1580.2,538.0 L1581.2,538.0 L1582.2,538.0 L1583.2,538.0 L1584.2,538.0 L1585.2,538.0 L1586.2,538.0 L1587.2,538.0 L1588.2,538.0 L1589.2,538.0 L1590.2,538.0 L1591.2,538.0 L1592.2,538.0 L1593.2,538.0 L1594.2,538.0 L1595.2,538.0 L1596.2,538.0 L1597.2,538.0 L1597.2,540.5 L1598.2,540.5 L1598.2,543.0 L1599.2,543.0 L1599.2,547.9 L1600.2,547.9 L1600.2,552.8 L1601.2,552.8 L1601.2,557.8 L1602.2,557.8 L1602.2,562.7 L1603.2,562.7 L1603.2,567.6 L1604.2,567.6 L1605.2,567.6 L1605.2,557.8 L1606.2,557.8 L1606.2,552.8 L1607.2,552.8 L1608.2,552.8 L1609.2,552.8 L1609.2,557.8 L1610.2,557.8 L1610.2,562.7 L1611.2,562.7 L1611.2,567.6 L1612.2,567.6 L1612.2,572.6 L1613.2,572.6 L1614.2,572.6 L1614.2,577.5 L1615.2,577.5 L1616.2,577.5 L1616.2,582.4 L1617.2,582.4 L1618.2,582.4 L1619.2,582.4 L1620.2,582.4 L1620.2,587.4 L1621.2,587.4 L1622.2,587.4 L1623.2,587.4 L1624.2,587.4 L1625.2,587.4 L1626.2,587.4 L1626.2,592.3 L1627.2,592.3 L1628.2,592.3 L1629.2,592.3 L1630.2,592.3 L1631.2,592.3 L1632.2,592.3 L1633.2,592.3 L1633.2,597.2 L1634.2,597.2 L1635.2,597.2 L1636.2,597.2 L1637.2,597.2 L1637.2,616.9 L1638.2,616.9 L1639.2,616.9 L1640.2,616.9 L1641.2,616.9 L1642.2,616.9 L1643.2,616.9 L1643.2,614.5 L1644.2,614.5 L1645.2,614.5 L1646.2,614.5 L1647.2,614.5 L1648.2,614.5 L1649.2,614.5 L1650.2,614.5 L1651.2,614.5 L1652.2,614.5 L1653.2,614.5 L1654.2,614.5 L1655.2,614.5 L1656.2,614.5 L1657.2,614.5 L1658.2,614.5 L1659.2,614.5 L1660.2,614.5 L1661.2,614.5 L1662.2,614.5 L1663.2,614.5 L1664.2,614.5 L1665.2,614.5 L1666.2,614.5 L1667.2,614.5 L1668.2,614.5 L1669.2,614.5 L1669.2,616.9 L1670.2,616.9 L1671.2,616.9 L1672.2,616.9 L1673.2,616.9 L1674.2,616.9 L1675.2,616.9 L1676.2,616.9 L1677.2,616.9 L1678.2,616.9 L1679.2,616.9 L1680.2,616.9 L1681.2,616.9 L1682.2,616.9 L1683.2,616.9 L1684.2,616.9 L1685.2,616.9 L1686.2,616.9 L1687.2,616.9 L1688.2,616.9 L1689.2,616.9 L1690.2,616.9 L1691.2,616.9 L1692.2,616.9 L1693.2,616.9 L1694.2,616.9 L1695.2,616.9 L1696.2,616.9 L1697.2,616.9 L1698.2,616.9 L1699.2,616.9 L1700.2,616.9 L1701.2,616.9 L1702.2,616.9 L1703.2,616.9 L1704.2,616.9 L1705.2,616.9 L1706.2,616.9 L1707.2,616.9 L1708.2,616.9 L1709.2,616.9 L1710.2,616.9 L1711.2,616.9 L1712.2,616.9 L1713.2,616.9 L1714.2,616.9 L1715.2,616.9 L1716.2,616.9 L1717.2,616.9 L1718.2,616.9 L1719.2,616.9 L1720.2,616.9 L1721.2,616.9 L1722.2,616.9 L1723.2,616.9 L1724.2,616.9 L1725.2,616.9 L1726.2,616.9 L1727.2,616.9 L1728.2,616.9 L1729.2,616.9 L1730.2,616.9 L1731.2,616.9 L1731.2,614.5 L1732.2,614.5 L1733.2,614.5 L1734.2,614.5 L1735.2,614.5 L1736.2,614.5 L1737.2,614.5 L1738.2,614.5 L1739.2,614.5 L1740.2,614.5 L1741.2,614.5 L1741.2,612.0 L1742.2,612.0 L1743.2,612.0 L1743.2,614.5 L1744.2,614.5 L1744.2,616.9 L1745.2,616.9 L1745.2,619.4 L1746.2,619.4 L1747.2,619.4 L1748.2,619.4 L1749.2,619.4 L1750.2,619.4 L1751.2,619.4 L1752.2,619.4 L1753.2,619.4 L1754.2,619.4 L1755.2,619.4 L1756.2,619.4 L1757.2,619.4 L1758.2,619.4 L1759.2,619.4 L1760.2,619.4 L1761.2,619.4" fill="none" stroke="#1991d5" stroke-width="4.0" stroke-linejoin="miter" stroke-linecap="butt"/>
<path d="M1546.2,538.2 L1546.2,538.2 L1547.2,538.2 L1547.2,538.2 L1548.2,538.2 L1549.2,538.2 L1549.2,538.2 L1550.2,538.2 L1551.2,538.2 L1552.2,538.2 L1553.2,538.2 L1554.2,538.2 L1555.2,538.2 L1556.2,538.2 L1557.2,538.2 L1558.2,538.2 L1559.2,538.2 L1560.2,538.2 L1561.2,538.2 L1561.2,538.2 L1562.2,538.2 L1563.2,538.2 L1564.2,538.2 L1565.2,538.2 L1565.2,538.2 L1566.2,538.2 L1567.2,538.2 L1568.2,538.2 L1569.2,538.2 L1570.2,536.6 L1571.2,536.6 L1572.2,536.6 L1573.2,536.6 L1574.2,536.6 L1575.2,536.6 L1576.2,536.6 L1577.2,536.6 L1578.2,536.6 L1579.2,536.6 L1580.2,536.6 L1581.2,536.6 L1582.2,536.6 L1583.2,536.6 L1584.2,536.6 L1585.2,536.6 L1586.2,536.6 L1587.2,536.6 L1588.2,536.6 L1589.2,536.6 L1590.2,536.6 L1591.2,536.6 L1592.2,536.6 L1593.2,536.6 L1594.2,536.6 L1595.2,536.6 L1596.2,536.6 L1597.2,536.6 L1597.2,536.6" fill="none" stroke="#1991d5" stroke-width="9.5" stroke-linejoin="miter" stroke-linecap="butt"/>
<path d="M1548.2,540.0 L1549.2,540.0 L1549.2,540.0 L1550.2,540.0 L1551.2,540.0 L1552.2,540.0 L1553.2,540.0 L1554.2,540.0 L1555.2,540.0 L1556.2,540.0 L1557.2,540.0 L1558.2,540.0 L1559.2,540.0 L1560.2,540.0 L1561.2,540.0 L1561.2,540.0 L1562.2,540.0 L1563.2,540.0 L1564.2,540.0 L1565.2,540.0 L1565.2,540.0" fill="none" stroke="#1991d5" stroke-width="12" stroke-linejoin="miter" stroke-linecap="butt"/>
<path d="M1301.2,602.3 L1301.2,641.9" fill="none" stroke="#1991d5" stroke-width="2.2" stroke-linejoin="miter" stroke-miterlimit="2" stroke-linecap="butt"/>
<path d="M1301.7,644.9 L1305.6,637.4" fill="none" stroke="#1991d5" stroke-width="1.6" stroke-linejoin="miter" stroke-miterlimit="2" stroke-linecap="butt"/>
<path d="M1306.1,617.0 L1306.1,643.5" fill="none" stroke="#1991d5" stroke-width="2.2" stroke-linejoin="miter" stroke-miterlimit="2" stroke-linecap="butt"/>
<path d="M1311.0,626.8 L1311.0,645.2" fill="none" stroke="#1991d5" stroke-width="2.2" stroke-linejoin="miter" stroke-miterlimit="2" stroke-linecap="butt"/>
<path d="M1316.0,626.8 L1316.0,646.5" fill="none" stroke="#1991d5" stroke-width="2.2" stroke-linejoin="miter" stroke-miterlimit="2" stroke-linecap="butt"/>
<path d="M1316.5,649.5 L1320.4,642.0" fill="none" stroke="#1991d5" stroke-width="1.6" stroke-linejoin="miter" stroke-miterlimit="2" stroke-linecap="butt"/>
<path d="M1321.0,626.8 L1321.0,647.5" fill="none" stroke="#1991d5" stroke-width="2.2" stroke-linejoin="miter" stroke-miterlimit="2" stroke-linecap="butt"/>
<path d="M1321.5,650.5 L1325.4,643.0" fill="none" stroke="#1991d5" stroke-width="1.6" stroke-linejoin="miter" stroke-miterlimit="2" stroke-linecap="butt"/>
<path d="M1325.8,621.9 L1325.8,648.4" fill="none" stroke="#1991d5" stroke-width="2.2" stroke-linejoin="miter" stroke-miterlimit="2" stroke-linecap="butt"/>
<path d="M1330.7,626.8 L1330.7,649.4" fill="none" stroke="#1991d5" stroke-width="2.2" stroke-linejoin="miter" stroke-miterlimit="2" stroke-linecap="butt"/>
<path d="M1331.0,649.4 L1331.0,655.9" fill="none" stroke="#1991d5" stroke-width="1.8" stroke-linejoin="miter" stroke-miterlimit="2" stroke-linecap="butt"/>
<path d="M1335.6,626.8 L1335.6,649.8" fill="none" stroke="#1991d5" stroke-width="2.2" stroke-linejoin="miter" stroke-miterlimit="2" stroke-linecap="butt"/>
<path d="M1340.5,626.8 L1340.5,650.2" fill="none" stroke="#1991d5" stroke-width="2.2" stroke-linejoin="miter" stroke-miterlimit="2" stroke-linecap="butt"/>
<path d="M1345.4,612.1 L1345.4,650.6" fill="none" stroke="#1991d5" stroke-width="2.2" stroke-linejoin="miter" stroke-miterlimit="2" stroke-linecap="butt"/>
<path d="M1345.7,650.6 L1345.7,656.5" fill="none" stroke="#1991d5" stroke-width="1.8" stroke-linejoin="miter" stroke-miterlimit="2" stroke-linecap="butt"/>
<path d="M1350.4,626.8 L1350.4,651.7" fill="none" stroke="#1991d5" stroke-width="2.2" stroke-linejoin="miter" stroke-miterlimit="2" stroke-linecap="butt"/>
<path d="M1350.7,651.7 L1350.7,659.1" fill="none" stroke="#1991d5" stroke-width="1.8" stroke-linejoin="miter" stroke-miterlimit="2" stroke-linecap="butt"/>
<path d="M1355.2,626.8 L1355.2,653.8" fill="none" stroke="#1991d5" stroke-width="2.2" stroke-linejoin="miter" stroke-miterlimit="2" stroke-linecap="butt"/>
<path d="M1360.2,636.9 L1360.2,656.5" fill="none" stroke="#1991d5" stroke-width="2.2" stroke-linejoin="miter" stroke-miterlimit="2" stroke-linecap="butt"/>
<path d="M1360.5,656.5 L1360.5,664.4" fill="none" stroke="#1991d5" stroke-width="1.8" stroke-linejoin="miter" stroke-miterlimit="2" stroke-linecap="butt"/>
<path d="M1365.1,636.9 L1365.1,659.3" fill="none" stroke="#1991d5" stroke-width="2.2" stroke-linejoin="miter" stroke-miterlimit="2" stroke-linecap="butt"/>
<path d="M1370.0,636.9 L1370.0,660.7" fill="none" stroke="#1991d5" stroke-width="2.2" stroke-linejoin="miter" stroke-miterlimit="2" stroke-linecap="butt"/>
<path d="M1374.9,641.9 L1374.9,661.5" fill="none" stroke="#1991d5" stroke-width="2.2" stroke-linejoin="miter" stroke-miterlimit="2" stroke-linecap="butt"/>
<path d="M1379.8,636.9 L1379.8,663.0" fill="none" stroke="#1991d5" stroke-width="2.2" stroke-linejoin="miter" stroke-miterlimit="2" stroke-linecap="butt"/>
<path d="M1380.1,663.0 L1380.1,668.0" fill="none" stroke="#1991d5" stroke-width="1.8" stroke-linejoin="miter" stroke-miterlimit="2" stroke-linecap="butt"/>
<path d="M1384.8,626.8 L1384.8,664.6" fill="none" stroke="#1991d5" stroke-width="2.2" stroke-linejoin="miter" stroke-miterlimit="2" stroke-linecap="butt"/>
<path d="M1385.3,667.6 L1389.2,660.1" fill="none" stroke="#1991d5" stroke-width="1.6" stroke-linejoin="miter" stroke-miterlimit="2" stroke-linecap="butt"/>
<path d="M1389.7,631.7 L1389.7,666.1" fill="none" stroke="#1991d5" stroke-width="2.2" stroke-linejoin="miter" stroke-miterlimit="2" stroke-linecap="butt"/>
<path d="M1390.0,666.1 L1390.0,671.7" fill="none" stroke="#1991d5" stroke-width="1.8" stroke-linejoin="miter" stroke-miterlimit="2" stroke-linecap="butt"/>
<path d="M1394.6,641.9 L1394.6,667.6" fill="none" stroke="#1991d5" stroke-width="2.2" stroke-linejoin="miter" stroke-miterlimit="2" stroke-linecap="butt"/>
<path d="M1394.9,667.6 L1394.9,672.7" fill="none" stroke="#1991d5" stroke-width="1.8" stroke-linejoin="miter" stroke-miterlimit="2" stroke-linecap="butt"/>
<path d="M1399.5,641.9 L1399.5,669.1" fill="none" stroke="#1991d5" stroke-width="2.2" stroke-linejoin="miter" stroke-miterlimit="2" stroke-linecap="butt"/>
<path d="M1400.0,672.1 L1403.9,664.6" fill="none" stroke="#1991d5" stroke-width="1.6" stroke-linejoin="miter" stroke-miterlimit="2" stroke-linecap="butt"/>
<path d="M1404.3,646.9 L1404.3,670.5" fill="none" stroke="#1991d5" stroke-width="2.2" stroke-linejoin="miter" stroke-miterlimit="2" stroke-linecap="butt"/>
<path d="M1404.8,673.5 L1408.7,666.0" fill="none" stroke="#1991d5" stroke-width="1.6" stroke-linejoin="miter" stroke-miterlimit="2" stroke-linecap="butt"/>
<path d="M1409.3,641.9 L1409.3,671.7" fill="none" stroke="#1991d5" stroke-width="2.2" stroke-linejoin="miter" stroke-miterlimit="2" stroke-linecap="butt"/>
<path d="M1414.1,646.9 L1414.1,672.9" fill="none" stroke="#1991d5" stroke-width="2.2" stroke-linejoin="miter" stroke-miterlimit="2" stroke-linecap="butt"/>
<path d="M1414.6,675.9 L1418.5,668.4" fill="none" stroke="#1991d5" stroke-width="1.6" stroke-linejoin="miter" stroke-miterlimit="2" stroke-linecap="butt"/>
<path d="M1419.1,636.9 L1419.1,674.2" fill="none" stroke="#1991d5" stroke-width="2.2" stroke-linejoin="miter" stroke-miterlimit="2" stroke-linecap="butt"/>
<path d="M1423.9,646.9 L1423.9,675.3" fill="none" stroke="#1991d5" stroke-width="2.2" stroke-linejoin="miter" stroke-miterlimit="2" stroke-linecap="butt"/>
<path d="M1424.4,678.3 L1428.3,670.8" fill="none" stroke="#1991d5" stroke-width="1.6" stroke-linejoin="miter" stroke-miterlimit="2" stroke-linecap="butt"/>
<path d="M1428.9,651.7 L1428.9,676.5" fill="none" stroke="#1991d5" stroke-width="2.2" stroke-linejoin="miter" stroke-miterlimit="2" stroke-linecap="butt"/>
<path d="M1433.7,651.7 L1433.7,677.7" fill="none" stroke="#1991d5" stroke-width="2.2" stroke-linejoin="miter" stroke-miterlimit="2" stroke-linecap="butt"/>
<path d="M1434.2,680.7 L1438.1,673.2" fill="none" stroke="#1991d5" stroke-width="1.6" stroke-linejoin="miter" stroke-miterlimit="2" stroke-linecap="butt"/>
<path d="M1438.7,641.9 L1438.7,678.9" fill="none" stroke="#1991d5" stroke-width="2.2" stroke-linejoin="miter" stroke-miterlimit="2" stroke-linecap="butt"/>
<path d="M1439.0,678.9 L1439.0,686.9" fill="none" stroke="#1991d5" stroke-width="1.8" stroke-linejoin="miter" stroke-miterlimit="2" stroke-linecap="butt"/>
<path d="M1443.5,656.7 L1443.5,680.2" fill="none" stroke="#1991d5" stroke-width="2.2" stroke-linejoin="miter" stroke-miterlimit="2" stroke-linecap="butt"/>
<path d="M1448.5,661.5 L1448.5,681.5" fill="none" stroke="#1991d5" stroke-width="2.2" stroke-linejoin="miter" stroke-miterlimit="2" stroke-linecap="butt"/>
<path d="M1453.3,656.7 L1453.3,682.7" fill="none" stroke="#1991d5" stroke-width="2.2" stroke-linejoin="miter" stroke-miterlimit="2" stroke-linecap="butt"/>
<path d="M1458.3,646.9 L1458.3,683.5" fill="none" stroke="#1991d5" stroke-width="2.2" stroke-linejoin="miter" stroke-miterlimit="2" stroke-linecap="butt"/>
<path d="M1458.8,686.5 L1462.7,679.0" fill="none" stroke="#1991d5" stroke-width="1.6" stroke-linejoin="miter" stroke-miterlimit="2" stroke-linecap="butt"/>
<path d="M1463.1,656.7 L1463.1,684.0" fill="none" stroke="#1991d5" stroke-width="2.2" stroke-linejoin="miter" stroke-miterlimit="2" stroke-linecap="butt"/>
<path d="M1463.4,684.0 L1463.4,689.9" fill="none" stroke="#1991d5" stroke-width="1.8" stroke-linejoin="miter" stroke-miterlimit="2" stroke-linecap="butt"/>
<path d="M1468.1,661.5 L1468.1,684.5" fill="none" stroke="#1991d5" stroke-width="2.2" stroke-linejoin="miter" stroke-miterlimit="2" stroke-linecap="butt"/>
<path d="M1468.4,684.5 L1468.4,691.8" fill="none" stroke="#1991d5" stroke-width="1.8" stroke-linejoin="miter" stroke-miterlimit="2" stroke-linecap="butt"/>
<path d="M1472.9,651.7 L1472.9,685.0" fill="none" stroke="#1991d5" stroke-width="2.2" stroke-linejoin="miter" stroke-miterlimit="2" stroke-linecap="butt"/>
<path d="M1473.4,688.0 L1477.3,680.5" fill="none" stroke="#1991d5" stroke-width="1.6" stroke-linejoin="miter" stroke-miterlimit="2" stroke-linecap="butt"/>
<path d="M1477.9,661.5 L1477.9,682.0" fill="none" stroke="#1991d5" stroke-width="2.2" stroke-linejoin="miter" stroke-miterlimit="2" stroke-linecap="butt"/>
<path d="M1479.8,656.7 L1479.8,678.5" fill="none" stroke="#1991d5" stroke-width="2.2" stroke-linejoin="miter" stroke-miterlimit="2" stroke-linecap="butt"/>
<path d="M1480.3,681.5 L1484.2,674.0" fill="none" stroke="#1991d5" stroke-width="1.6" stroke-linejoin="miter" stroke-miterlimit="2" stroke-linecap="butt"/>
<path d="M1636.9,587.5 L1636.9,616.2" fill="none" stroke="#1991d5" stroke-width="2.2" stroke-linejoin="miter" stroke-miterlimit="2" stroke-linecap="butt"/>
<path d="M1641.7,587.5 L1641.7,615.8" fill="none" stroke="#1991d5" stroke-width="2.2" stroke-linejoin="miter" stroke-miterlimit="2" stroke-linecap="butt"/>
<path d="M1646.2,587.5 L1646.2,615.4" fill="none" stroke="#1991d5" stroke-width="2.2" stroke-linejoin="miter" stroke-miterlimit="2" stroke-linecap="butt"/>
<path d="M1646.5,615.4 L1646.5,621.1" fill="none" stroke="#1991d5" stroke-width="1.8" stroke-linejoin="miter" stroke-miterlimit="2" stroke-linecap="butt"/>
<path d="M1650.6,587.5 L1650.6,615.2" fill="none" stroke="#1991d5" stroke-width="2.2" stroke-linejoin="miter" stroke-miterlimit="2" stroke-linecap="butt"/>
<path d="M1655.6,587.5 L1655.6,615.3" fill="none" stroke="#1991d5" stroke-width="2.2" stroke-linejoin="miter" stroke-miterlimit="2" stroke-linecap="butt"/>
<path d="M1656.1,618.3 L1660.0,610.8" fill="none" stroke="#1991d5" stroke-width="1.6" stroke-linejoin="miter" stroke-miterlimit="2" stroke-linecap="butt"/>
<path d="M1659.9,572.4 L1659.9,615.4" fill="none" stroke="#1991d5" stroke-width="2.2" stroke-linejoin="miter" stroke-miterlimit="2" stroke-linecap="butt"/>
<path d="M1664.9,572.4 L1664.9,615.6" fill="none" stroke="#1991d5" stroke-width="2.2" stroke-linejoin="miter" stroke-miterlimit="2" stroke-linecap="butt"/>
<path d="M1665.4,618.6 L1669.3,611.1" fill="none" stroke="#1991d5" stroke-width="1.6" stroke-linejoin="miter" stroke-miterlimit="2" stroke-linecap="butt"/>
<path d="M1669.7,587.5 L1669.7,615.7" fill="none" stroke="#1991d5" stroke-width="2.2" stroke-linejoin="miter" stroke-miterlimit="2" stroke-linecap="butt"/>
<path d="M1670.0,615.7 L1670.0,622.6" fill="none" stroke="#1991d5" stroke-width="1.8" stroke-linejoin="miter" stroke-miterlimit="2" stroke-linecap="butt"/>
<path d="M1674.3,577.7 L1674.3,615.9" fill="none" stroke="#1991d5" stroke-width="2.2" stroke-linejoin="miter" stroke-miterlimit="2" stroke-linecap="butt"/>
<path d="M1679.3,577.7 L1679.3,616.0" fill="none" stroke="#1991d5" stroke-width="2.2" stroke-linejoin="miter" stroke-miterlimit="2" stroke-linecap="butt"/>
<path d="M1679.6,616.0 L1679.6,621.3" fill="none" stroke="#1991d5" stroke-width="1.8" stroke-linejoin="miter" stroke-miterlimit="2" stroke-linecap="butt"/>
<path d="M1684.1,587.5 L1684.1,616.2" fill="none" stroke="#1991d5" stroke-width="2.2" stroke-linejoin="miter" stroke-miterlimit="2" stroke-linecap="butt"/>
<path d="M1684.6,619.2 L1688.5,611.7" fill="none" stroke="#1991d5" stroke-width="1.6" stroke-linejoin="miter" stroke-miterlimit="2" stroke-linecap="butt"/>
<path d="M1688.9,587.5 L1688.9,616.2" fill="none" stroke="#1991d5" stroke-width="2.2" stroke-linejoin="miter" stroke-miterlimit="2" stroke-linecap="butt"/>
<path d="M1693.9,587.5 L1693.9,616.3" fill="none" stroke="#1991d5" stroke-width="2.2" stroke-linejoin="miter" stroke-miterlimit="2" stroke-linecap="butt"/>
<path d="M1698.7,582.7 L1698.7,616.3" fill="none" stroke="#1991d5" stroke-width="2.2" stroke-linejoin="miter" stroke-miterlimit="2" stroke-linecap="butt"/>
<path d="M1699.0,616.3 L1699.0,622.1" fill="none" stroke="#1991d5" stroke-width="1.8" stroke-linejoin="miter" stroke-miterlimit="2" stroke-linecap="butt"/>
<path d="M1703.7,597.3 L1703.7,616.4" fill="none" stroke="#1991d5" stroke-width="2.2" stroke-linejoin="miter" stroke-miterlimit="2" stroke-linecap="butt"/>
<path d="M1704.0,616.4 L1704.0,621.6" fill="none" stroke="#1991d5" stroke-width="1.8" stroke-linejoin="miter" stroke-miterlimit="2" stroke-linecap="butt"/>
<path d="M1708.5,597.3 L1708.5,616.4" fill="none" stroke="#1991d5" stroke-width="2.2" stroke-linejoin="miter" stroke-miterlimit="2" stroke-linecap="butt"/>
<path d="M1713.5,597.3 L1713.5,616.5" fill="none" stroke="#1991d5" stroke-width="2.2" stroke-linejoin="miter" stroke-miterlimit="2" stroke-linecap="butt"/>
<path d="M1713.8,616.5 L1713.8,623.2" fill="none" stroke="#1991d5" stroke-width="1.8" stroke-linejoin="miter" stroke-miterlimit="2" stroke-linecap="butt"/>
<path d="M1718.3,597.3 L1718.3,616.5" fill="none" stroke="#1991d5" stroke-width="2.2" stroke-linejoin="miter" stroke-miterlimit="2" stroke-linecap="butt"/>
<path d="M1718.8,619.5 L1722.7,612.0" fill="none" stroke="#1991d5" stroke-width="1.6" stroke-linejoin="miter" stroke-miterlimit="2" stroke-linecap="butt"/>
<path d="M1723.3,582.7 L1723.3,616.4" fill="none" stroke="#1991d5" stroke-width="2.2" stroke-linejoin="miter" stroke-miterlimit="2" stroke-linecap="butt"/>
<path d="M1723.6,616.4 L1723.6,623.5" fill="none" stroke="#1991d5" stroke-width="1.8" stroke-linejoin="miter" stroke-miterlimit="2" stroke-linecap="butt"/>
<path d="M1728.1,597.3 L1728.1,615.9" fill="none" stroke="#1991d5" stroke-width="2.2" stroke-linejoin="miter" stroke-miterlimit="2" stroke-linecap="butt"/>
<path d="M1728.4,615.9 L1728.4,622.9" fill="none" stroke="#1991d5" stroke-width="1.8" stroke-linejoin="miter" stroke-miterlimit="2" stroke-linecap="butt"/>
<path d="M1733.1,582.7 L1733.1,615.5" fill="none" stroke="#1991d5" stroke-width="2.2" stroke-linejoin="miter" stroke-miterlimit="2" stroke-linecap="butt"/>
<path d="M1733.4,615.5 L1733.4,621.7" fill="none" stroke="#1991d5" stroke-width="1.8" stroke-linejoin="miter" stroke-miterlimit="2" stroke-linecap="butt"/>
<path d="M1737.9,592.3 L1737.9,614.7" fill="none" stroke="#1991d5" stroke-width="2.2" stroke-linejoin="miter" stroke-miterlimit="2" stroke-linecap="butt"/>
<path d="M1738.2,614.7 L1738.2,620.5" fill="none" stroke="#1991d5" stroke-width="1.8" stroke-linejoin="miter" stroke-miterlimit="2" stroke-linecap="butt"/>
<path d="M1742.7,582.7 L1742.7,613.6" fill="none" stroke="#1991d5" stroke-width="2.2" stroke-linejoin="miter" stroke-miterlimit="2" stroke-linecap="butt"/>
<path d="M1747.7,582.7 L1747.7,619.2" fill="none" stroke="#1991d5" stroke-width="2.2" stroke-linejoin="miter" stroke-miterlimit="2" stroke-linecap="butt"/>
<path d="M1752.7,597.3 L1752.7,619.5" fill="none" stroke="#1991d5" stroke-width="2.2" stroke-linejoin="miter" stroke-miterlimit="2" stroke-linecap="butt"/>
<path d="M1753.2,622.5 L1757.1,615.0" fill="none" stroke="#1991d5" stroke-width="1.6" stroke-linejoin="miter" stroke-miterlimit="2" stroke-linecap="butt"/>
<path d="M1757.7,582.7 L1757.7,619.7" fill="none" stroke="#1991d5" stroke-width="2.2" stroke-linejoin="miter" stroke-miterlimit="2" stroke-linecap="butt"/>
<path d="M1544.8,531.2 L1544.8,547.5" fill="none" stroke="#1991d5" stroke-width="1.4" stroke-linejoin="miter" stroke-miterlimit="2" stroke-linecap="butt"/>
<path d="M1548.7,529.4 L1548.7,544.9" fill="none" stroke="#1991d5" stroke-width="1.4" stroke-linejoin="miter" stroke-miterlimit="2" stroke-linecap="butt"/>
<path d="M1552.9,531.1 L1552.9,546.3" fill="none" stroke="#1991d5" stroke-width="1.4" stroke-linejoin="miter" stroke-miterlimit="2" stroke-linecap="butt"/>
<path d="M1556.7,530.7 L1556.7,546.7" fill="none" stroke="#1991d5" stroke-width="1.4" stroke-linejoin="miter" stroke-miterlimit="2" stroke-linecap="butt"/>
<path d="M1559.0,531.6 L1559.0,549.2" fill="none" stroke="#1991d5" stroke-width="1.4" stroke-linejoin="miter" stroke-miterlimit="2" stroke-linecap="butt"/>
<path d="M1561.7,529.6 L1561.7,547.3" fill="none" stroke="#1991d5" stroke-width="1.4" stroke-linejoin="miter" stroke-miterlimit="2" stroke-linecap="butt"/>
<path d="M1564.8,528.2 L1564.8,548.4" fill="none" stroke="#1991d5" stroke-width="1.4" stroke-linejoin="miter" stroke-miterlimit="2" stroke-linecap="butt"/>
<path d="M1568.1,528.5 L1568.1,545.6" fill="none" stroke="#1991d5" stroke-width="1.4" stroke-linejoin="miter" stroke-miterlimit="2" stroke-linecap="butt"/>
<path d="M1570.6,528.4 L1570.6,551.4" fill="none" stroke="#1991d5" stroke-width="1.4" stroke-linejoin="miter" stroke-miterlimit="2" stroke-linecap="butt"/>
<path d="M1573.3,531.2 L1573.3,550.7" fill="none" stroke="#1991d5" stroke-width="1.4" stroke-linejoin="miter" stroke-miterlimit="2" stroke-linecap="butt"/>
<path d="M1577.4,531.2 L1577.4,552.6" fill="none" stroke="#1991d5" stroke-width="1.4" stroke-linejoin="miter" stroke-miterlimit="2" stroke-linecap="butt"/>
<path d="M1581.4,529.6 L1581.4,547.8" fill="none" stroke="#1991d5" stroke-width="1.4" stroke-linejoin="miter" stroke-miterlimit="2" stroke-linecap="butt"/>
<path d="M1583.8,531.8 L1583.8,552.7" fill="none" stroke="#1991d5" stroke-width="1.4" stroke-linejoin="miter" stroke-miterlimit="2" stroke-linecap="butt"/>
<path d="M1586.5,529.2 L1586.5,546.3" fill="none" stroke="#1991d5" stroke-width="1.4" stroke-linejoin="miter" stroke-miterlimit="2" stroke-linecap="butt"/>
<path d="M1590.3,529.6 L1590.3,546.6" fill="none" stroke="#1991d5" stroke-width="1.4" stroke-linejoin="miter" stroke-miterlimit="2" stroke-linecap="butt"/>
<path d="M1592.9,529.1 L1592.9,544.6" fill="none" stroke="#1991d5" stroke-width="1.4" stroke-linejoin="miter" stroke-miterlimit="2" stroke-linecap="butt"/>
<path d="M1595.5,529.8 L1595.5,551.7" fill="none" stroke="#1991d5" stroke-width="1.4" stroke-linejoin="miter" stroke-miterlimit="2" stroke-linecap="butt"/>
<path d="M1564.2,523.4 L1564.2,536.7" fill="none" stroke="#1991d5" stroke-width="1.8" stroke-linejoin="miter" stroke-miterlimit="2" stroke-linecap="butt"/>
<path d="M1593.6,523.4 L1593.6,557.2" fill="none" stroke="#1991d5" stroke-width="1.8" stroke-linejoin="miter" stroke-miterlimit="2" stroke-linecap="butt"/>
<path d="M1551.7,527.8 L1551.7,562.0" fill="none" stroke="#1991d5" stroke-width="1.8" stroke-linejoin="miter" stroke-miterlimit="2" stroke-linecap="butt"/>
<path d="M1574.0,533.2 L1574.0,552.8" fill="none" stroke="#1991d5" stroke-width="1.8" stroke-linejoin="miter" stroke-miterlimit="2" stroke-linecap="butt"/>
<path d="M1558.9,531.4 L1558.9,557.2" fill="none" stroke="#1991d5" stroke-width="1.8" stroke-linejoin="miter" stroke-miterlimit="2" stroke-linecap="butt"/>
<path d="M1554.4,533.2 L1554.4,556.7" fill="none" stroke="#1991d5" stroke-width="1.8" stroke-linejoin="miter" stroke-miterlimit="2" stroke-linecap="butt"/>
<path d="M1473.0,651.5 L1473.0,686.0" fill="none" stroke="#1991d5" stroke-width="1.6" stroke-linejoin="miter" stroke-miterlimit="2" stroke-linecap="butt"/>
<path d="M1479.6,657.0 L1479.6,690.0" fill="none" stroke="#1991d5" stroke-width="1.8" stroke-linejoin="miter" stroke-miterlimit="2" stroke-linecap="butt"/>
<text x="1462.7" y="700" font-size="12.6" font-weight="400" fill="#ee8a0a" stroke="#ee8a0a" stroke-width="0.35" text-anchor="middle" textLength="90" lengthAdjust="spacingAndGlyphs">Akku 2000: Volt</text>
<rect x="410" y="803" width="645" height="250" fill="#141414"/>
<text x="453" y="816.0" font-size="12.5" fill="#656565" text-anchor="end">13.7W</text>
<text x="453" y="829.0" font-size="12.5" fill="#656565" text-anchor="end">13.5W</text>
<text x="453" y="862.0" font-size="12.5" fill="#656565" text-anchor="end">13W</text>
<text x="453" y="894.0" font-size="12.5" fill="#656565" text-anchor="end">12.5W</text>
<text x="453" y="927.0" font-size="12.5" fill="#656565" text-anchor="end">12W</text>
<text x="453" y="959.0" font-size="12.5" fill="#656565" text-anchor="end">11.5W</text>
<text x="453" y="992.0" font-size="12.5" fill="#656565" text-anchor="end">11W</text>
<text x="453" y="1018.0" font-size="12.5" fill="#656565" text-anchor="end">10.6W</text>
<rect x="460" y="1013" width="577" height="1" fill="#5e5e62"/>
<rect x="479.9" y="1013" width="1" height="5" fill="#5e5e62"/>
<text x="477.5" y="1032" font-size="12.3" fill="#656565" text-anchor="middle">00:00</text>
<rect x="527.9" y="1013" width="1" height="5" fill="#5e5e62"/>
<text x="527.9" y="1032" font-size="12.3" fill="#656565" text-anchor="middle">02:00</text>
<rect x="575.9" y="1013" width="1" height="5" fill="#5e5e62"/>
<text x="575.9" y="1032" font-size="12.3" fill="#656565" text-anchor="middle">04:00</text>
<rect x="623.9" y="1013" width="1" height="5" fill="#5e5e62"/>
<text x="623.9" y="1032" font-size="12.3" fill="#656565" text-anchor="middle">06:00</text>
<rect x="671.9" y="1013" width="1" height="5" fill="#5e5e62"/>
<text x="671.9" y="1032" font-size="12.3" fill="#656565" text-anchor="middle">08:00</text>
<rect x="719.9" y="1013" width="1" height="5" fill="#5e5e62"/>
<text x="719.9" y="1032" font-size="12.3" fill="#656565" text-anchor="middle">10:00</text>
<rect x="767.9" y="1013" width="1" height="5" fill="#5e5e62"/>
<text x="767.9" y="1032" font-size="12.3" fill="#656565" text-anchor="middle">12:00</text>
<rect x="815.9" y="1013" width="1" height="5" fill="#5e5e62"/>
<text x="815.9" y="1032" font-size="12.3" fill="#656565" text-anchor="middle">14:00</text>
<rect x="863.9" y="1013" width="1" height="5" fill="#5e5e62"/>
<text x="863.9" y="1032" font-size="12.3" fill="#656565" text-anchor="middle">16:00</text>
<rect x="911.9" y="1013" width="1" height="5" fill="#5e5e62"/>
<text x="911.9" y="1032" font-size="12.3" fill="#656565" text-anchor="middle">18:00</text>
<rect x="959.9" y="1013" width="1" height="5" fill="#5e5e62"/>
<text x="959.9" y="1032" font-size="12.3" fill="#656565" text-anchor="middle">20:00</text>
<rect x="1007.9" y="1013" width="1" height="5" fill="#5e5e62"/>
<text x="1007.9" y="1032" font-size="12.3" fill="#656565" text-anchor="middle">22:00</text>
<text x="463" y="1043.6" font-size="11.5" font-weight="700" fill="#707074" letter-spacing="0.8">15.12.</text>
<path d="M461.0,856.4 L932.1,856.4 L932.4,837.1 L933.3,856.3 L934.4,882.5 L935.3,837.1 L936.6,843.5 L937.5,869.4 L938.8,869.4 L939.7,837.1 L940.3,837.1 L941.2,862.7 L942.2,875.8 L943.1,837.1 L943.8,843.5 L944.7,869.4 L946.0,875.8 L946.9,849.9 L947.6,843.5 L948.5,862.7 L949.0,862.7 L949.9,843.5 L950.1,824.4 L951.0,875.8 L951.8,869.4 L952.7,849.9 L953.8,856.3 L954.7,869.4 L956.1,869.4 L957.0,824.4 L957.8,849.9 L958.7,862.7 L959.1,862.7 L960.0,843.5 L961.1,862.7 L962.0,869.4 L962.8,869.4 L963.7,862.7 L964.6,862.7 L965.5,869.4 L966.6,869.4 L967.5,856.3 L968.1,849.9 L969.0,869.4 L969.5,869.4 L970.4,849.9 L971.4,856.3 L972.3,862.7 L973.0,862.7 L973.9,849.9 L974.2,843.5 L975.1,882.5 L975.9,869.4 L976.8,856.3 L977.9,856.3 L978.8,869.4 L979.8,862.7 L980.7,843.5 L982.0,856.3 L982.9,862.7 L983.9,862.7 L984.8,849.9 L986.2,849.9 L987.1,888.9 L987.3,862.7 L988.2,843.5 L988.8,849.9 L989.7,862.7 L990.4,862.7 L991.3,856.3 L992.2,843.5 L993.1,856.3 L994.1,862.7 L995.0,849.9 L995.9,856.3 L996.8,862.7 L997.3,862.7 L998.2,849.9 L998.5,849.9 L999.4,875.8 L1000.5,862.7 L1001.4,849.9 L1002.3,856.3 L1003.2,869.4 L1003.4,869.4 L1004.3,843.5 L1005.6,849.9 L1006.5,869.4 L1007.4,869.4 L1008.3,849.9 L1009.0,856.3 L1009.9,862.7 L1010.8,869.4 L1011.7,849.9 L1012.7,849.9 L1013.6,862.7 L1014.2,869.4 L1015.1,856.3 L1016.4,856.3 L1017.3,869.4 L1018.4,862.7 L1019.3,837.1 L1019.9,837.1 L1020.8,862.7 L1021.6,862.7 L1022.5,837.1 L1023.6,849.9 L1024.5,862.7 L1025.6,856.3 L1026.5,843.5 L1027.4,849.9 L1028.3,862.7 L1029.2,862.7 L1030.1,843.5 L1031.9,837.1 L1032.1,993.3 L1032.4,849.9 L1033.4,849.9 L1034.3,869.4 L1035.5,869.4 L1036.4,849.9 L1037.5,869.4" fill="none" stroke="#1991d5" stroke-width="2" stroke-linejoin="miter" stroke-miterlimit="2" stroke-linecap="butt"/>
<text x="737.6" y="1005" font-size="12.6" font-weight="400" fill="#ee8a0a" stroke="#ee8a0a" stroke-width="0.35" text-anchor="middle" textLength="70" lengthAdjust="spacingAndGlyphs">Klimaanlage</text>
<rect x="1135" y="803" width="645" height="250" fill="#141414"/>
<text x="1180" y="816.0" font-size="12.5" fill="#656565" text-anchor="end">20W</text>
<text x="1180" y="838.0" font-size="12.5" fill="#656565" text-anchor="end">0W</text>
<text x="1180" y="872.0" font-size="12.5" fill="#656565" text-anchor="end">-30W</text>
<text x="1180" y="906.0" font-size="12.5" fill="#656565" text-anchor="end">-60W</text>
<text x="1180" y="939.0" font-size="12.5" fill="#656565" text-anchor="end">-90W</text>
<text x="1180" y="973.0" font-size="12.5" fill="#656565" text-anchor="end">-120W</text>
<text x="1180" y="1007.0" font-size="12.5" fill="#656565" text-anchor="end">-150W</text>
<rect x="1188" y="833" width="574" height="1" fill="#5e5e62"/>
<rect x="1207.1" y="833" width="1" height="5" fill="#5e5e62"/>
<text x="1204.5" y="1032" font-size="12.3" fill="#656565" text-anchor="middle">00:00</text>
<rect x="1255.0" y="833" width="1" height="5" fill="#5e5e62"/>
<text x="1255.0" y="1032" font-size="12.3" fill="#656565" text-anchor="middle">02:00</text>
<rect x="1302.9" y="833" width="1" height="5" fill="#5e5e62"/>
<text x="1302.9" y="1032" font-size="12.3" fill="#656565" text-anchor="middle">04:00</text>
<rect x="1350.8" y="833" width="1" height="5" fill="#5e5e62"/>
<text x="1350.8" y="1032" font-size="12.3" fill="#656565" text-anchor="middle">06:00</text>
<rect x="1398.7" y="833" width="1" height="5" fill="#5e5e62"/>
<text x="1398.7" y="1032" font-size="12.3" fill="#656565" text-anchor="middle">08:00</text>
<rect x="1446.6" y="833" width="1" height="5" fill="#5e5e62"/>
<text x="1446.6" y="1032" font-size="12.3" fill="#656565" text-anchor="middle">10:00</text>
<rect x="1494.5" y="833" width="1" height="5" fill="#5e5e62"/>
<text x="1494.5" y="1032" font-size="12.3" fill="#656565" text-anchor="middle">12:00</text>
<rect x="1542.4" y="833" width="1" height="5" fill="#5e5e62"/>
<text x="1542.4" y="1032" font-size="12.3" fill="#656565" text-anchor="middle">14:00</text>
<rect x="1590.3" y="833" width="1" height="5" fill="#5e5e62"/>
<text x="1590.3" y="1032" font-size="12.3" fill="#656565" text-anchor="middle">16:00</text>
<rect x="1638.2" y="833" width="1" height="5" fill="#5e5e62"/>
<text x="1638.2" y="1032" font-size="12.3" fill="#656565" text-anchor="middle">18:00</text>
<rect x="1686.1" y="833" width="1" height="5" fill="#5e5e62"/>
<text x="1686.1" y="1032" font-size="12.3" fill="#656565" text-anchor="middle">20:00</text>
<rect x="1734.0" y="833" width="1" height="5" fill="#5e5e62"/>
<text x="1734.0" y="1032" font-size="12.3" fill="#656565" text-anchor="middle">22:00</text>
<text x="1190" y="1043.6" font-size="11.5" font-weight="700" fill="#707074" letter-spacing="0.8">15.12.</text>
<path d="M1188.0,833.0 L1400.0,833.0 L1519.0,870.4 L1519.5,994.3 L1537.3,994.3 L1537.6,833.0 L1762.0,833.0" fill="none" stroke="#1991d5" stroke-width="2.1" stroke-linejoin="round" stroke-miterlimit="2" stroke-linecap="butt"/>
<text x="1462.7" y="1005" font-size="12.6" font-weight="400" fill="#ee8a0a" stroke="#ee8a0a" stroke-width="0.35" text-anchor="middle" textLength="108.5" lengthAdjust="spacingAndGlyphs">Marstek Jupiter C+</text>
</svg>
</div></body></html>
